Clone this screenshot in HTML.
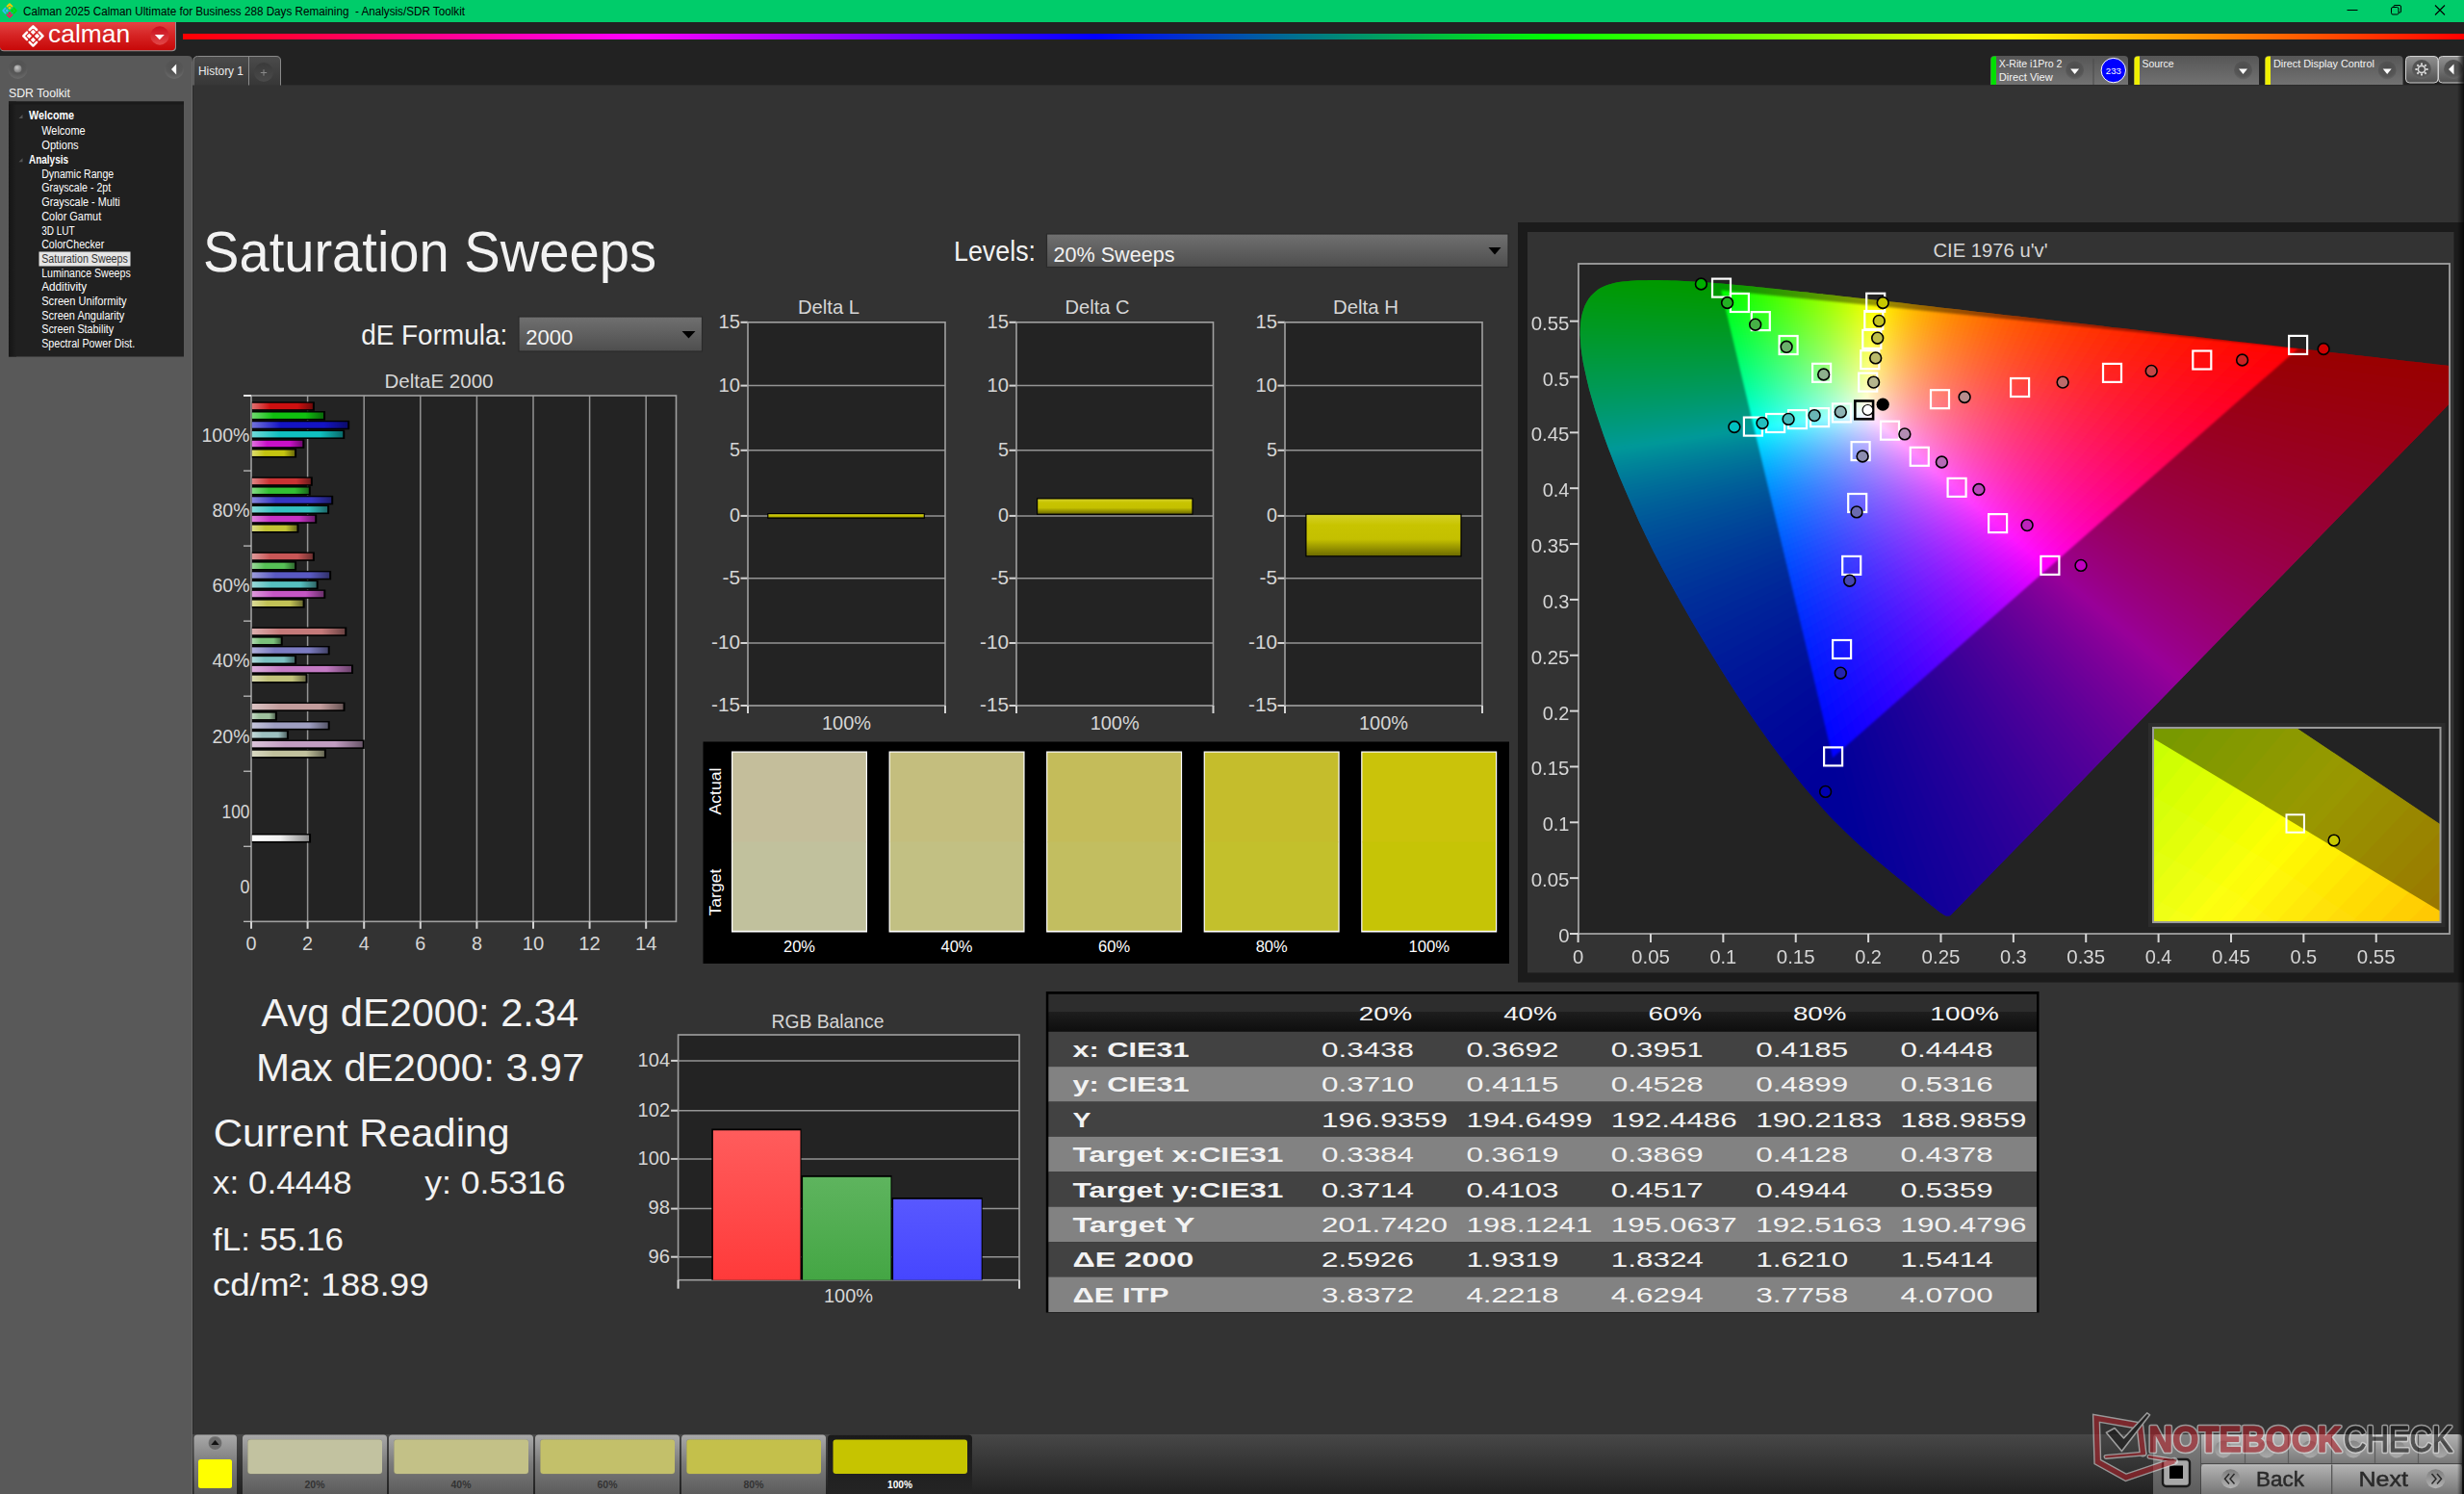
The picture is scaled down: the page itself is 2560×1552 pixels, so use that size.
<!DOCTYPE html>
<html lang="en"><head><meta charset="utf-8"><title>Calman 2025 - Analysis/SDR Toolkit</title>
<style>html,body{margin:0;padding:0;background:#333;overflow:hidden}svg{display:block;font-family:"Liberation Sans",sans-serif}text{font-kerning:normal}</style>
</head><body>
<svg width="2560" height="1552" viewBox="0 0 2560 1552">
<defs>
<linearGradient id="rainbow" x1="0" x2="1" y1="0" y2="0">
<stop offset="0" stop-color="#ff0000"/><stop offset="0.2" stop-color="#ff00ff"/><stop offset="0.4" stop-color="#0000ff"/>
<stop offset="0.6" stop-color="#00ff00"/><stop offset="0.8" stop-color="#ffff00"/><stop offset="1" stop-color="#ff0000"/>
</linearGradient>
<linearGradient id="redbtn" x1="0" x2="0" y1="0" y2="1"><stop offset="0" stop-color="#e24444"/><stop offset="0.5" stop-color="#d52222"/><stop offset="1" stop-color="#c80808"/></linearGradient>
<linearGradient id="devbox" x1="0" x2="0" y1="0" y2="1"><stop offset="0" stop-color="#565656"/><stop offset="1" stop-color="#727272"/></linearGradient>
<linearGradient id="tabg" x1="0" x2="0" y1="0" y2="1"><stop offset="0" stop-color="#4b4b4b"/><stop offset="1" stop-color="#373737"/></linearGradient>
<linearGradient id="gearbtn" x1="0" x2="0" y1="0" y2="1"><stop offset="0" stop-color="#919191"/><stop offset="1" stop-color="#505050"/></linearGradient>
<radialGradient id="ddc" cx="0.5" cy="0.35" r="0.7"><stop offset="0" stop-color="#4c4c4c"/><stop offset="0.7" stop-color="#565656"/><stop offset="1" stop-color="#6c6c6c"/></radialGradient>
<radialGradient id="sidec" cx="0.5" cy="0.3" r="0.75"><stop offset="0" stop-color="#505050"/><stop offset="0.6" stop-color="#575757"/><stop offset="1" stop-color="#6e6e6e"/></radialGradient>
<radialGradient id="ball" cx="0.4" cy="0.35" r="0.7"><stop offset="0" stop-color="#c8c8c8"/><stop offset="1" stop-color="#707070"/></radialGradient>
<linearGradient id="treeL" x1="0" x2="1" y1="0" y2="0"><stop offset="0" stop-color="#151515"/><stop offset="1" stop-color="#202020"/></linearGradient>
<linearGradient id="strip" x1="0" x2="0" y1="0" y2="1"><stop offset="0" stop-color="#474747"/><stop offset="1" stop-color="#222222"/></linearGradient>
<linearGradient id="pbtn" x1="0" x2="0" y1="0" y2="1"><stop offset="0" stop-color="#a9a9a9"/><stop offset="0.5" stop-color="#7a7a7a"/><stop offset="1" stop-color="#5c5c5c"/></linearGradient>
<linearGradient id="pbtnsel" x1="0" x2="0" y1="0" y2="1"><stop offset="0" stop-color="#1a1a1a"/><stop offset="1" stop-color="#242424"/></linearGradient>
<linearGradient id="navbtn" x1="0" x2="0" y1="0" y2="1"><stop offset="0" stop-color="#b4b4b4"/><stop offset="1" stop-color="#777777"/></linearGradient>
<linearGradient id="combo" x1="0" x2="0" y1="0" y2="1"><stop offset="0" stop-color="#707070"/><stop offset="1" stop-color="#4e4e4e"/></linearGradient>
<linearGradient id="redge" x1="0" x2="1" y1="0" y2="0"><stop offset="0" stop-color="#000" stop-opacity="0"/><stop offset="1" stop-color="#000" stop-opacity="0.75"/></linearGradient>
</defs>
<rect x="0.00" y="0.00" width="2560.00" height="1552.00" fill="#333333"/>
<rect x="0.00" y="23.00" width="2560.00" height="65.00" fill="#222222"/>
<rect x="0.00" y="0.00" width="2560.00" height="23.00" fill="#00cc6a"/>
<g transform="translate(10,11) rotate(45) scale(0.68)">
<path d="M-7.15,-1.9 V-7.15 H-1.9" fill="none" stroke="#ffc800" stroke-width="2.5" stroke-linecap="round" stroke-linejoin="round"/><path d="M1.9,-7.15 H7.15 V-1.9" fill="none" stroke="#00dc00" stroke-width="2.5" stroke-linecap="round" stroke-linejoin="round"/><path d="M7.15,1.9 V7.15 H1.9" fill="none" stroke="#ff1060" stroke-width="2.5" stroke-linecap="round" stroke-linejoin="round"/><path d="M-1.9,7.15 H-7.15 V1.9" fill="none" stroke="#33bbff" stroke-width="2.5" stroke-linecap="round" stroke-linejoin="round"/><rect x="-4.80" y="-4.80" width="3.8" height="3.8" rx="0.4" fill="#ffc800"/><rect x="1.00" y="-4.80" width="3.8" height="3.8" rx="0.4" fill="#00dc00"/><rect x="1.00" y="1.00" width="3.8" height="3.8" rx="0.4" fill="#ff1060"/><rect x="-4.80" y="1.00" width="3.8" height="3.8" rx="0.4" fill="#33bbff"/>
</g>
<text x="24.0" y="16.0" font-size="12" fill="#000" textLength="459.0" lengthAdjust="spacingAndGlyphs" xml:space="preserve">Calman 2025 Calman Ultimate for Business 288 Days Remaining  - Analysis/SDR Toolkit</text>
<line x1="2438.50" y1="10.50" x2="2449.50" y2="10.50" stroke="#000" stroke-width="1"/>
<rect x="2484.5" y="7.5" width="7.5" height="7.5" rx="1.5" fill="none" stroke="#000" stroke-width="1"/>
<path d="M2487 7.5 V6.5 Q2487 5.5 2488 5.5 H2493 Q2494.5 5.5 2494.5 7 V12 Q2494.5 13 2493.5 13 H2492" fill="none" stroke="#000" stroke-width="1"/>
<path d="M2530 5.5 L2540 15.5 M2540 5.5 L2530 15.5" stroke="#000" stroke-width="1.1" fill="none"/>
<path d="M0 23 H183 V49 Q183 53.3 178.7 53.3 H4 Q0 53.3 0 49 Z" fill="#8e9292"/>
<path d="M0 23 H182 V48.5 Q182 52.2 178.3 52.2 H4 Q0 52.2 0 48.5 Z" fill="url(#redbtn)"/>
<rect x="0.00" y="23.00" width="182.00" height="1.00" fill="#f03444"/>
<g transform="translate(34.4,37.4) rotate(45) scale(1)">
<path d="M-7.15,-1.9 V-7.15 H-1.9" fill="none" stroke="#fff" stroke-width="2.5" stroke-linecap="round" stroke-linejoin="round"/><path d="M1.9,-7.15 H7.15 V-1.9" fill="none" stroke="#fff" stroke-width="2.5" stroke-linecap="round" stroke-linejoin="round"/><path d="M7.15,1.9 V7.15 H1.9" fill="none" stroke="#fff" stroke-width="2.5" stroke-linecap="round" stroke-linejoin="round"/><path d="M-1.9,7.15 H-7.15 V1.9" fill="none" stroke="#fff" stroke-width="2.5" stroke-linecap="round" stroke-linejoin="round"/><rect x="-4.80" y="-4.80" width="3.8" height="3.8" rx="0.4" fill="#fff"/><rect x="1.00" y="-4.80" width="3.8" height="3.8" rx="0.4" fill="#fff"/><rect x="1.00" y="1.00" width="3.8" height="3.8" rx="0.4" fill="#fff"/><rect x="-4.80" y="1.00" width="3.8" height="3.8" rx="0.4" fill="#fff"/>
</g>
<text x="50.1" y="44.0" font-size="25" fill="#fff" textLength="85.0" lengthAdjust="spacingAndGlyphs">calman</text>
<defs><linearGradient id="redc" x1="0" x2="0" y1="0" y2="1"><stop offset="0" stop-color="#c80c1c"/><stop offset="1" stop-color="#e24848"/></linearGradient></defs>
<circle cx="166" cy="37" r="9.7" fill="url(#redc)"/>
<polygon points="160.8,36 170.8,36 165.8,41.2" fill="#fff"/>
<rect x="190.00" y="35.00" width="2370.00" height="6.00" fill="url(#rainbow)"/>
<path d="M0 58 H195 Q200 58 200 63 V1552 H0 Z" fill="#595959"/>
<line x1="199.50" y1="64.00" x2="199.50" y2="1552.00" stroke="#676767" stroke-width="1"/>
<line x1="200.50" y1="88.00" x2="200.50" y2="1552.00" stroke="#2a2a2a" stroke-width="1"/>
<circle cx="18.5" cy="72" r="10" fill="url(#sidec)"/><circle cx="18.5" cy="71.5" r="4" fill="url(#ball)"/>
<circle cx="181" cy="72" r="10" fill="url(#sidec)"/><polygon points="178,72 183.2,66.5 183.2,77.5" fill="#fff"/>
<text x="9.0" y="100.5" font-size="12.3" fill="#f4f4f4" textLength="64.0" lengthAdjust="spacingAndGlyphs">SDR Toolkit</text>
<rect x="9.00" y="105.50" width="182.00" height="265.00" fill="#202020"/>
<rect x="9.00" y="105.50" width="8.00" height="265.00" fill="url(#treeL)"/>
<rect x="9.00" y="105.50" width="182.00" height="3.00" fill="#1a1a1a"/>
<polygon points="19.5,123 23.5,123 23.5,119" fill="#555"/>
<text x="30.0" y="124.4" font-size="12" fill="#fff" font-weight="bold" textLength="47.0" lengthAdjust="spacingAndGlyphs">Welcome</text>
<text x="43.2" y="140.4" font-size="12" fill="#fff" textLength="45.5" lengthAdjust="spacingAndGlyphs">Welcome</text>
<text x="43.2" y="154.7" font-size="12" fill="#fff" textLength="38.5" lengthAdjust="spacingAndGlyphs">Options</text>
<polygon points="19.5,168.3 23.5,168.3 23.5,164.3" fill="#555"/>
<text x="30.0" y="169.7" font-size="12" fill="#fff" font-weight="bold" textLength="41.0" lengthAdjust="spacingAndGlyphs">Analysis</text>
<text x="43.2" y="185.2" font-size="12" fill="#fff" textLength="75.0" lengthAdjust="spacingAndGlyphs">Dynamic Range</text>
<text x="43.2" y="199.4" font-size="12" fill="#fff" textLength="72.0" lengthAdjust="spacingAndGlyphs">Grayscale - 2pt</text>
<text x="43.2" y="214.4" font-size="12" fill="#fff" textLength="81.5" lengthAdjust="spacingAndGlyphs">Grayscale - Multi</text>
<text x="43.2" y="229.4" font-size="12" fill="#fff" textLength="62.0" lengthAdjust="spacingAndGlyphs">Color Gamut</text>
<text x="43.2" y="243.7" font-size="12" fill="#fff" textLength="34.5" lengthAdjust="spacingAndGlyphs">3D LUT</text>
<text x="43.2" y="258.4" font-size="12" fill="#fff" textLength="65.0" lengthAdjust="spacingAndGlyphs">ColorChecker</text>
<rect x="40.50" y="261.50" width="95.00" height="15.00" fill="#e4e4e4"/>
<text x="43.2" y="273.2" font-size="12" fill="#333" textLength="89.6" lengthAdjust="spacingAndGlyphs">Saturation Sweeps</text>
<text x="43.2" y="287.8" font-size="12" fill="#fff" textLength="92.5" lengthAdjust="spacingAndGlyphs">Luminance Sweeps</text>
<text x="43.2" y="302.4" font-size="12" fill="#fff" textLength="47.0" lengthAdjust="spacingAndGlyphs">Additivity</text>
<text x="43.2" y="317.4" font-size="12" fill="#fff" textLength="88.5" lengthAdjust="spacingAndGlyphs">Screen Uniformity</text>
<text x="43.2" y="331.7" font-size="12" fill="#fff" textLength="86.0" lengthAdjust="spacingAndGlyphs">Screen Angularity</text>
<text x="43.2" y="346.4" font-size="12" fill="#fff" textLength="75.0" lengthAdjust="spacingAndGlyphs">Screen Stability</text>
<text x="43.2" y="361.4" font-size="12" fill="#fff" textLength="97.0" lengthAdjust="spacingAndGlyphs">Spectral Power Dist.</text>
<path d="M201 88.5 V63 Q201 58.5 205.5 58.5 H287 Q291.5 58.5 291.5 63 V88.5 Z" fill="url(#tabg)"/>
<path d="M201 88.5 V63 Q201 58.5 205.5 58.5 H287 Q291.5 58.5 291.5 63 V88.5" fill="none" stroke="#8a8a8a" stroke-width="1"/>
<line x1="258.50" y1="59.00" x2="258.50" y2="88.50" stroke="#8a8a8a" stroke-width="1"/>
<line x1="292.00" y1="88.50" x2="2560.00" y2="88.50" stroke="#2c2c2c" stroke-width="1"/>
<text x="206.0" y="78.2" font-size="12" fill="#ececec" textLength="47.0" lengthAdjust="spacingAndGlyphs">History 1</text>
<defs><linearGradient id="plusc" x1="0" x2="0" y1="0" y2="1"><stop offset="0" stop-color="#3a3a3a"/><stop offset="1" stop-color="#4a4a4a"/></linearGradient></defs>
<circle cx="274" cy="75" r="10" fill="url(#plusc)"/>
<path d="M270.8 75.5 H277.2 M274 72.3 V78.7" stroke="#8a8a8a" stroke-width="1"/>
<path d="M2068 88 V62 Q2068 58 2072 58 H2207 Q2211 58 2211 62 V88 Z" fill="url(#devbox)"/>
<path d="M2068.5 88 V62 Q2068.5 58.5 2072 58.5 H2074 V88 Z" fill="#00e000"/>
<text x="2076.8" y="69.5" font-size="11" fill="#f4f4f4" textLength="65.7" lengthAdjust="spacingAndGlyphs">X-Rite i1Pro 2</text>
<text x="2076.8" y="83.5" font-size="11" fill="#f4f4f4" textLength="56.0" lengthAdjust="spacingAndGlyphs">Direct View</text>
<circle cx="2155.6" cy="73" r="9.5" fill="url(#ddc)"/><polygon points="2151.1,71.5 2160.1,71.5 2155.6,77" fill="#fff"/>
<line x1="2175.00" y1="61.00" x2="2175.00" y2="88.00" stroke="#4a4a4a" stroke-width="1"/>
<circle cx="2195.8" cy="73.1" r="12.7" fill="#0000ff" stroke="#fff" stroke-width="1"/>
<text x="2195.8" y="76.5" font-size="9.5" fill="#fff" text-anchor="middle" textLength="16.0" lengthAdjust="spacingAndGlyphs">233</text>
<path d="M2217 88 V62 Q2217 58 2221 58 H2343 Q2347 58 2347 62 V88 Z" fill="url(#devbox)"/>
<path d="M2217.5 88 V62 Q2217.5 58.5 2221 58.5 H2223 V88 Z" fill="#f0f000"/>
<text x="2225.6" y="69.5" font-size="11" fill="#f4f4f4" textLength="33.0" lengthAdjust="spacingAndGlyphs">Source</text>
<circle cx="2330.5" cy="73" r="9.5" fill="url(#ddc)"/><polygon points="2326.0,71.5 2335.0,71.5 2330.5,77" fill="#fff"/>
<path d="M2353 88 V62 Q2353 58 2357 58 H2492.5 Q2496.5 58 2496.5 62 V88 Z" fill="url(#devbox)"/>
<path d="M2353.5 88 V62 Q2353.5 58.5 2357 58.5 H2359 V88 Z" fill="#f0f000"/>
<text x="2361.9" y="69.5" font-size="11" fill="#f4f4f4" textLength="105.0" lengthAdjust="spacingAndGlyphs">Direct Display Control</text>
<circle cx="2480.2" cy="73" r="9.5" fill="url(#ddc)"/><polygon points="2475.7,71.5 2484.7,71.5 2480.2,77" fill="#fff"/>
<rect x="2499.5" y="58.5" width="33.5" height="27.5" rx="4" fill="url(#gearbtn)" stroke="#d0d0d0" stroke-width="1"/>
<rect x="2533.5" y="58.5" width="33.5" height="27.5" rx="4" fill="url(#gearbtn)" stroke="#d0d0d0" stroke-width="1"/>
<circle cx="2516" cy="72" r="10" fill="url(#ddc)"/><circle cx="2549" cy="72" r="10" fill="url(#ddc)"/>
<g transform="translate(2516,72)" stroke="#d8d8d8" fill="none"><circle r="3.6" stroke-width="1.6"/><line x1="4.40" y1="0.00" x2="6.60" y2="0.00" stroke-width="2"/><line x1="3.11" y1="3.11" x2="4.67" y2="4.67" stroke-width="2"/><line x1="0.00" y1="4.40" x2="0.00" y2="6.60" stroke-width="2"/><line x1="-3.11" y1="3.11" x2="-4.67" y2="4.67" stroke-width="2"/><line x1="-4.40" y1="0.00" x2="-6.60" y2="0.00" stroke-width="2"/><line x1="-3.11" y1="-3.11" x2="-4.67" y2="-4.67" stroke-width="2"/><line x1="-0.00" y1="-4.40" x2="-0.00" y2="-6.60" stroke-width="2"/><line x1="3.11" y1="-3.11" x2="4.67" y2="-4.67" stroke-width="2"/></g>
<polygon points="2544,72 2549.5,66.5 2549.5,77.5" fill="#fff"/>
<text x="211.0" y="282.0" font-size="60" fill="#f2f2f2" textLength="471.0" lengthAdjust="spacingAndGlyphs">Saturation Sweeps</text>
<text x="527.2" y="358.0" font-size="29" fill="#f2f2f2" text-anchor="end" textLength="152.0" lengthAdjust="spacingAndGlyphs">dE Formula:</text>
<rect x="539" y="329" width="190.5" height="36" fill="url(#combo)" stroke="#2a2a2a" stroke-width="1.2"/>
<text x="546.2" y="358.0" font-size="22.5" fill="#f2f2f2" textLength="49.0" lengthAdjust="spacingAndGlyphs">2000</text>
<polygon points="708.5,344 722.5,344 715.5,351.5" fill="#000"/>
<text x="1076.0" y="270.5" font-size="29" fill="#f2f2f2" text-anchor="end" textLength="85.0" lengthAdjust="spacingAndGlyphs">Levels:</text>
<rect x="1087.5" y="243" width="479.5" height="34.5" fill="url(#combo)" stroke="#2a2a2a" stroke-width="1.2"/>
<clipPath id="lvclip"><rect x="1088" y="243.5" width="478" height="33.5"/></clipPath>
<g clip-path="url(#lvclip)"><text x="1094.5" y="272.0" font-size="22.5" fill="#f2f2f2" textLength="126.0" lengthAdjust="spacingAndGlyphs">20% Sweeps</text>
</g>
<polygon points="1546.5,257 1559.5,257 1553,264.5" fill="#000"/>
<text x="456.0" y="402.5" font-size="21" fill="#d6d6d6" text-anchor="middle" textLength="113.0" lengthAdjust="spacingAndGlyphs">DeltaE 2000</text>
<rect x="261.00" y="411.00" width="441.50" height="546.30" fill="#232323"/>
<line x1="319.60" y1="411.00" x2="319.60" y2="957.30" stroke="#949494" stroke-width="1.5"/>
<line x1="378.20" y1="411.00" x2="378.20" y2="957.30" stroke="#949494" stroke-width="1.5"/>
<line x1="436.80" y1="411.00" x2="436.80" y2="957.30" stroke="#949494" stroke-width="1.5"/>
<line x1="495.40" y1="411.00" x2="495.40" y2="957.30" stroke="#949494" stroke-width="1.5"/>
<line x1="554.00" y1="411.00" x2="554.00" y2="957.30" stroke="#949494" stroke-width="1.5"/>
<line x1="612.60" y1="411.00" x2="612.60" y2="957.30" stroke="#949494" stroke-width="1.5"/>
<line x1="671.20" y1="411.00" x2="671.20" y2="957.30" stroke="#949494" stroke-width="1.5"/>
<rect x="261.0" y="411.0" width="441.5" height="546.3" fill="none" stroke="#a0a0a0" stroke-width="1.6"/>
<line x1="253.00" y1="411.00" x2="261.00" y2="411.00" stroke="#e8e8e8" stroke-width="2"/>
<line x1="253.00" y1="489.04" x2="261.00" y2="489.04" stroke="#c8c8c8" stroke-width="1.2"/>
<line x1="253.00" y1="567.09" x2="261.00" y2="567.09" stroke="#c8c8c8" stroke-width="1.2"/>
<line x1="253.00" y1="645.13" x2="261.00" y2="645.13" stroke="#c8c8c8" stroke-width="1.2"/>
<line x1="253.00" y1="723.17" x2="261.00" y2="723.17" stroke="#c8c8c8" stroke-width="1.2"/>
<line x1="253.00" y1="801.21" x2="261.00" y2="801.21" stroke="#c8c8c8" stroke-width="1.2"/>
<line x1="253.00" y1="879.26" x2="261.00" y2="879.26" stroke="#c8c8c8" stroke-width="1.2"/>
<line x1="253.00" y1="957.30" x2="261.00" y2="957.30" stroke="#c8c8c8" stroke-width="1.2"/>
<text x="259.5" y="459.3" font-size="21" fill="#d6d6d6" text-anchor="end" textLength="50.0" lengthAdjust="spacingAndGlyphs">100%</text>
<text x="259.5" y="537.4" font-size="21" fill="#d6d6d6" text-anchor="end" textLength="39.0" lengthAdjust="spacingAndGlyphs">80%</text>
<text x="259.5" y="615.4" font-size="21" fill="#d6d6d6" text-anchor="end" textLength="39.0" lengthAdjust="spacingAndGlyphs">60%</text>
<text x="259.5" y="693.4" font-size="21" fill="#d6d6d6" text-anchor="end" textLength="39.0" lengthAdjust="spacingAndGlyphs">40%</text>
<text x="259.5" y="771.5" font-size="21" fill="#d6d6d6" text-anchor="end" textLength="39.0" lengthAdjust="spacingAndGlyphs">20%</text>
<text x="259.5" y="849.5" font-size="21" fill="#d6d6d6" text-anchor="end" textLength="29.0" lengthAdjust="spacingAndGlyphs">100</text>
<text x="259.5" y="927.6" font-size="21" fill="#d6d6d6" text-anchor="end" textLength="10.0" lengthAdjust="spacingAndGlyphs">0</text>
<line x1="261.00" y1="957.30" x2="261.00" y2="964.80" stroke="#d4d4d4" stroke-width="2"/>
<text x="261.0" y="987.3" font-size="21" fill="#d6d6d6" text-anchor="middle" textLength="11.0" lengthAdjust="spacingAndGlyphs">0</text>
<line x1="319.60" y1="957.30" x2="319.60" y2="964.80" stroke="#d4d4d4" stroke-width="2"/>
<text x="319.6" y="987.3" font-size="21" fill="#d6d6d6" text-anchor="middle" textLength="11.0" lengthAdjust="spacingAndGlyphs">2</text>
<line x1="378.20" y1="957.30" x2="378.20" y2="964.80" stroke="#d4d4d4" stroke-width="2"/>
<text x="378.2" y="987.3" font-size="21" fill="#d6d6d6" text-anchor="middle" textLength="11.0" lengthAdjust="spacingAndGlyphs">4</text>
<line x1="436.80" y1="957.30" x2="436.80" y2="964.80" stroke="#d4d4d4" stroke-width="2"/>
<text x="436.8" y="987.3" font-size="21" fill="#d6d6d6" text-anchor="middle" textLength="11.0" lengthAdjust="spacingAndGlyphs">6</text>
<line x1="495.40" y1="957.30" x2="495.40" y2="964.80" stroke="#d4d4d4" stroke-width="2"/>
<text x="495.4" y="987.3" font-size="21" fill="#d6d6d6" text-anchor="middle" textLength="11.0" lengthAdjust="spacingAndGlyphs">8</text>
<line x1="554.00" y1="957.30" x2="554.00" y2="964.80" stroke="#d4d4d4" stroke-width="2"/>
<text x="554.0" y="987.3" font-size="21" fill="#d6d6d6" text-anchor="middle" textLength="22.5" lengthAdjust="spacingAndGlyphs">10</text>
<line x1="612.60" y1="957.30" x2="612.60" y2="964.80" stroke="#d4d4d4" stroke-width="2"/>
<text x="612.6" y="987.3" font-size="21" fill="#d6d6d6" text-anchor="middle" textLength="22.5" lengthAdjust="spacingAndGlyphs">12</text>
<line x1="671.20" y1="957.30" x2="671.20" y2="964.80" stroke="#d4d4d4" stroke-width="2"/>
<text x="671.2" y="987.3" font-size="21" fill="#d6d6d6" text-anchor="middle" textLength="22.5" lengthAdjust="spacingAndGlyphs">14</text>
<defs>
<linearGradient id="bg1" x1="0" x2="1" y1="0" y2="0"><stop offset="0" stop-color="#e17070"/><stop offset="0.3" stop-color="#cd1010"/><stop offset="0.75" stop-color="#cd1010"/><stop offset="1" stop-color="#710909"/></linearGradient>
<linearGradient id="bg2" x1="0" x2="1" y1="0" y2="0"><stop offset="0" stop-color="#70d970"/><stop offset="0.3" stop-color="#10c010"/><stop offset="0.75" stop-color="#10c010"/><stop offset="1" stop-color="#096a09"/></linearGradient>
<linearGradient id="bg3" x1="0" x2="1" y1="0" y2="0"><stop offset="0" stop-color="#7272db"/><stop offset="0.3" stop-color="#1414c3"/><stop offset="0.75" stop-color="#1414c3"/><stop offset="1" stop-color="#0b0b6b"/></linearGradient>
<linearGradient id="bg4" x1="0" x2="1" y1="0" y2="0"><stop offset="0" stop-color="#70d9d9"/><stop offset="0.3" stop-color="#10c0c0"/><stop offset="0.75" stop-color="#10c0c0"/><stop offset="1" stop-color="#096a6a"/></linearGradient>
<linearGradient id="bg5" x1="0" x2="1" y1="0" y2="0"><stop offset="0" stop-color="#de70de"/><stop offset="0.3" stop-color="#c810c8"/><stop offset="0.75" stop-color="#c810c8"/><stop offset="1" stop-color="#6e096e"/></linearGradient>
<linearGradient id="bg6" x1="0" x2="1" y1="0" y2="0"><stop offset="0" stop-color="#dcdc70"/><stop offset="0.3" stop-color="#c4c410"/><stop offset="0.75" stop-color="#c4c410"/><stop offset="1" stop-color="#6c6c09"/></linearGradient>
<linearGradient id="bg7" x1="0" x2="1" y1="0" y2="0"><stop offset="0" stop-color="#df8585"/><stop offset="0.3" stop-color="#ca3333"/><stop offset="0.75" stop-color="#ca3333"/><stop offset="1" stop-color="#6f1c1c"/></linearGradient>
<linearGradient id="bg8" x1="0" x2="1" y1="0" y2="0"><stop offset="0" stop-color="#85d985"/><stop offset="0.3" stop-color="#33c033"/><stop offset="0.75" stop-color="#33c033"/><stop offset="1" stop-color="#1c6a1c"/></linearGradient>
<linearGradient id="bg9" x1="0" x2="1" y1="0" y2="0"><stop offset="0" stop-color="#8787db"/><stop offset="0.3" stop-color="#3636c2"/><stop offset="0.75" stop-color="#3636c2"/><stop offset="1" stop-color="#1e1e6b"/></linearGradient>
<linearGradient id="bg10" x1="0" x2="1" y1="0" y2="0"><stop offset="0" stop-color="#85d9d9"/><stop offset="0.3" stop-color="#33c0c0"/><stop offset="0.75" stop-color="#33c0c0"/><stop offset="1" stop-color="#1c6a6a"/></linearGradient>
<linearGradient id="bg11" x1="0" x2="1" y1="0" y2="0"><stop offset="0" stop-color="#dd85dd"/><stop offset="0.3" stop-color="#c633c6"/><stop offset="0.75" stop-color="#c633c6"/><stop offset="1" stop-color="#6d1c6d"/></linearGradient>
<linearGradient id="bg12" x1="0" x2="1" y1="0" y2="0"><stop offset="0" stop-color="#dbdb85"/><stop offset="0.3" stop-color="#c3c333"/><stop offset="0.75" stop-color="#c3c333"/><stop offset="1" stop-color="#6b6b1c"/></linearGradient>
<linearGradient id="bg13" x1="0" x2="1" y1="0" y2="0"><stop offset="0" stop-color="#de9a9a"/><stop offset="0.3" stop-color="#c85656"/><stop offset="0.75" stop-color="#c85656"/><stop offset="1" stop-color="#6e3030"/></linearGradient>
<linearGradient id="bg14" x1="0" x2="1" y1="0" y2="0"><stop offset="0" stop-color="#9ad99a"/><stop offset="0.3" stop-color="#56c056"/><stop offset="0.75" stop-color="#56c056"/><stop offset="1" stop-color="#306a30"/></linearGradient>
<linearGradient id="bg15" x1="0" x2="1" y1="0" y2="0"><stop offset="0" stop-color="#9b9bda"/><stop offset="0.3" stop-color="#5959c2"/><stop offset="0.75" stop-color="#5959c2"/><stop offset="1" stop-color="#31316b"/></linearGradient>
<linearGradient id="bg16" x1="0" x2="1" y1="0" y2="0"><stop offset="0" stop-color="#9ad9d9"/><stop offset="0.3" stop-color="#56c0c0"/><stop offset="0.75" stop-color="#56c0c0"/><stop offset="1" stop-color="#306a6a"/></linearGradient>
<linearGradient id="bg17" x1="0" x2="1" y1="0" y2="0"><stop offset="0" stop-color="#dc9adc"/><stop offset="0.3" stop-color="#c556c5"/><stop offset="0.75" stop-color="#c556c5"/><stop offset="1" stop-color="#6c306c"/></linearGradient>
<linearGradient id="bg18" x1="0" x2="1" y1="0" y2="0"><stop offset="0" stop-color="#dbdb9a"/><stop offset="0.3" stop-color="#c2c256"/><stop offset="0.75" stop-color="#c2c256"/><stop offset="1" stop-color="#6b6b30"/></linearGradient>
<linearGradient id="bg19" x1="0" x2="1" y1="0" y2="0"><stop offset="0" stop-color="#dcafaf"/><stop offset="0.3" stop-color="#c57a7a"/><stop offset="0.75" stop-color="#c57a7a"/><stop offset="1" stop-color="#6c4343"/></linearGradient>
<linearGradient id="bg20" x1="0" x2="1" y1="0" y2="0"><stop offset="0" stop-color="#afd9af"/><stop offset="0.3" stop-color="#7ac07a"/><stop offset="0.75" stop-color="#7ac07a"/><stop offset="1" stop-color="#436a43"/></linearGradient>
<linearGradient id="bg21" x1="0" x2="1" y1="0" y2="0"><stop offset="0" stop-color="#b0b0da"/><stop offset="0.3" stop-color="#7b7bc1"/><stop offset="0.75" stop-color="#7b7bc1"/><stop offset="1" stop-color="#44446a"/></linearGradient>
<linearGradient id="bg22" x1="0" x2="1" y1="0" y2="0"><stop offset="0" stop-color="#afd9d9"/><stop offset="0.3" stop-color="#7ac0c0"/><stop offset="0.75" stop-color="#7ac0c0"/><stop offset="1" stop-color="#436a6a"/></linearGradient>
<linearGradient id="bg23" x1="0" x2="1" y1="0" y2="0"><stop offset="0" stop-color="#dbafdb"/><stop offset="0.3" stop-color="#c37ac3"/><stop offset="0.75" stop-color="#c37ac3"/><stop offset="1" stop-color="#6b436b"/></linearGradient>
<linearGradient id="bg24" x1="0" x2="1" y1="0" y2="0"><stop offset="0" stop-color="#dadaaf"/><stop offset="0.3" stop-color="#c2c27a"/><stop offset="0.75" stop-color="#c2c27a"/><stop offset="1" stop-color="#6a6a43"/></linearGradient>
<linearGradient id="bg25" x1="0" x2="1" y1="0" y2="0"><stop offset="0" stop-color="#dbc4c4"/><stop offset="0.3" stop-color="#c39d9d"/><stop offset="0.75" stop-color="#c39d9d"/><stop offset="1" stop-color="#6b5656"/></linearGradient>
<linearGradient id="bg26" x1="0" x2="1" y1="0" y2="0"><stop offset="0" stop-color="#c4d9c4"/><stop offset="0.3" stop-color="#9dc09d"/><stop offset="0.75" stop-color="#9dc09d"/><stop offset="1" stop-color="#566a56"/></linearGradient>
<linearGradient id="bg27" x1="0" x2="1" y1="0" y2="0"><stop offset="0" stop-color="#c5c5da"/><stop offset="0.3" stop-color="#9e9ec1"/><stop offset="0.75" stop-color="#9e9ec1"/><stop offset="1" stop-color="#57576a"/></linearGradient>
<linearGradient id="bg28" x1="0" x2="1" y1="0" y2="0"><stop offset="0" stop-color="#c4d9d9"/><stop offset="0.3" stop-color="#9dc0c0"/><stop offset="0.75" stop-color="#9dc0c0"/><stop offset="1" stop-color="#566a6a"/></linearGradient>
<linearGradient id="bg29" x1="0" x2="1" y1="0" y2="0"><stop offset="0" stop-color="#dac4da"/><stop offset="0.3" stop-color="#c29dc2"/><stop offset="0.75" stop-color="#c29dc2"/><stop offset="1" stop-color="#6a566a"/></linearGradient>
<linearGradient id="bg30" x1="0" x2="1" y1="0" y2="0"><stop offset="0" stop-color="#dadac4"/><stop offset="0.3" stop-color="#c1c19d"/><stop offset="0.75" stop-color="#c1c19d"/><stop offset="1" stop-color="#6a6a56"/></linearGradient>
<linearGradient id="bgw" x1="0" x2="1" y1="0" y2="0"><stop offset="0" stop-color="#ffffff"/><stop offset="0.5" stop-color="#f0f0f0"/><stop offset="1" stop-color="#8a8a8a"/></linearGradient>
</defs>
<rect x="261.80" y="417.36" width="65.07" height="9.40" fill="#000"/>
<rect x="261.80" y="418.76" width="63.07" height="6.40" fill="url(#bg1)"/>
<rect x="261.80" y="427.11" width="76.21" height="9.40" fill="#000"/>
<rect x="261.80" y="428.51" width="74.21" height="6.40" fill="url(#bg2)"/>
<rect x="261.80" y="436.87" width="101.41" height="9.40" fill="#000"/>
<rect x="261.80" y="438.27" width="99.41" height="6.40" fill="url(#bg3)"/>
<rect x="261.80" y="446.62" width="96.43" height="9.40" fill="#000"/>
<rect x="261.80" y="448.02" width="94.43" height="6.40" fill="url(#bg4)"/>
<rect x="261.80" y="456.38" width="54.53" height="9.40" fill="#000"/>
<rect x="261.80" y="457.78" width="52.53" height="6.40" fill="url(#bg5)"/>
<rect x="261.80" y="466.13" width="46.32" height="9.40" fill="#000"/>
<rect x="261.80" y="467.53" width="44.32" height="6.40" fill="url(#bg6)"/>
<rect x="261.80" y="495.40" width="63.02" height="9.40" fill="#000"/>
<rect x="261.80" y="496.80" width="61.02" height="6.40" fill="url(#bg7)"/>
<rect x="261.80" y="505.15" width="60.97" height="9.40" fill="#000"/>
<rect x="261.80" y="506.55" width="58.97" height="6.40" fill="url(#bg8)"/>
<rect x="261.80" y="514.91" width="84.41" height="9.40" fill="#000"/>
<rect x="261.80" y="516.31" width="82.41" height="6.40" fill="url(#bg9)"/>
<rect x="261.80" y="524.66" width="80.31" height="9.40" fill="#000"/>
<rect x="261.80" y="526.06" width="78.31" height="6.40" fill="url(#bg10)"/>
<rect x="261.80" y="534.42" width="67.42" height="9.40" fill="#000"/>
<rect x="261.80" y="535.82" width="65.42" height="6.40" fill="url(#bg11)"/>
<rect x="261.80" y="544.18" width="48.67" height="9.40" fill="#000"/>
<rect x="261.80" y="545.58" width="46.67" height="6.40" fill="url(#bg12)"/>
<rect x="261.80" y="573.44" width="65.07" height="9.40" fill="#000"/>
<rect x="261.80" y="574.84" width="63.07" height="6.40" fill="url(#bg13)"/>
<rect x="261.80" y="583.20" width="46.32" height="9.40" fill="#000"/>
<rect x="261.80" y="584.60" width="44.32" height="6.40" fill="url(#bg14)"/>
<rect x="261.80" y="592.95" width="82.36" height="9.40" fill="#000"/>
<rect x="261.80" y="594.35" width="80.36" height="6.40" fill="url(#bg15)"/>
<rect x="261.80" y="602.71" width="68.88" height="9.40" fill="#000"/>
<rect x="261.80" y="604.11" width="66.88" height="6.40" fill="url(#bg16)"/>
<rect x="261.80" y="612.46" width="76.50" height="9.40" fill="#000"/>
<rect x="261.80" y="613.86" width="74.50" height="6.40" fill="url(#bg17)"/>
<rect x="261.80" y="622.22" width="54.82" height="9.40" fill="#000"/>
<rect x="261.80" y="623.62" width="52.82" height="6.40" fill="url(#bg18)"/>
<rect x="261.80" y="651.48" width="98.48" height="9.40" fill="#000"/>
<rect x="261.80" y="652.88" width="96.48" height="6.40" fill="url(#bg19)"/>
<rect x="261.80" y="661.24" width="31.96" height="9.40" fill="#000"/>
<rect x="261.80" y="662.64" width="29.96" height="6.40" fill="url(#bg20)"/>
<rect x="261.80" y="670.99" width="80.90" height="9.40" fill="#000"/>
<rect x="261.80" y="672.39" width="78.90" height="6.40" fill="url(#bg21)"/>
<rect x="261.80" y="680.75" width="46.32" height="9.40" fill="#000"/>
<rect x="261.80" y="682.15" width="44.32" height="6.40" fill="url(#bg22)"/>
<rect x="261.80" y="690.51" width="105.22" height="9.40" fill="#000"/>
<rect x="261.80" y="691.91" width="103.22" height="6.40" fill="url(#bg23)"/>
<rect x="261.80" y="700.26" width="57.75" height="9.40" fill="#000"/>
<rect x="261.80" y="701.66" width="55.75" height="6.40" fill="url(#bg24)"/>
<rect x="261.80" y="729.53" width="96.72" height="9.40" fill="#000"/>
<rect x="261.80" y="730.93" width="94.72" height="6.40" fill="url(#bg25)"/>
<rect x="261.80" y="739.28" width="26.11" height="9.40" fill="#000"/>
<rect x="261.80" y="740.68" width="24.11" height="6.40" fill="url(#bg26)"/>
<rect x="261.80" y="749.04" width="80.90" height="9.40" fill="#000"/>
<rect x="261.80" y="750.44" width="78.90" height="6.40" fill="url(#bg27)"/>
<rect x="261.80" y="758.79" width="38.12" height="9.40" fill="#000"/>
<rect x="261.80" y="760.19" width="36.12" height="6.40" fill="url(#bg28)"/>
<rect x="261.80" y="768.55" width="116.94" height="9.40" fill="#000"/>
<rect x="261.80" y="769.95" width="114.94" height="6.40" fill="url(#bg29)"/>
<rect x="261.80" y="778.30" width="77.09" height="9.40" fill="#000"/>
<rect x="261.80" y="779.70" width="75.09" height="6.40" fill="url(#bg30)"/>
<rect x="261.80" y="866.10" width="61.27" height="9.40" fill="#000"/>
<rect x="261.80" y="867.50" width="59.27" height="6.40" fill="url(#bgw)"/>
<defs><linearGradient id="ybar" x1="0" x2="0" y1="0" y2="1"><stop offset="0" stop-color="#d4d028"/><stop offset="0.25" stop-color="#c8c400"/><stop offset="0.6" stop-color="#c4c000"/><stop offset="1" stop-color="#6e6c00"/></linearGradient></defs>
<text x="861.0" y="326.0" font-size="21" fill="#d6d6d6" text-anchor="middle" textLength="64.0" lengthAdjust="spacingAndGlyphs">Delta L</text>
<rect x="777.00" y="334.80" width="205.00" height="398.20" fill="#232323"/>
<line x1="769.50" y1="334.80" x2="777.00" y2="334.80" stroke="#d4d4d4" stroke-width="2"/>
<text x="769.0" y="341.1" font-size="21" fill="#d6d6d6" text-anchor="end" textLength="22.5" lengthAdjust="spacingAndGlyphs">15</text>
<line x1="777.00" y1="400.60" x2="982.00" y2="400.60" stroke="#949494" stroke-width="1.5"/>
<line x1="769.50" y1="400.60" x2="777.00" y2="400.60" stroke="#d4d4d4" stroke-width="2"/>
<text x="769.0" y="406.9" font-size="21" fill="#d6d6d6" text-anchor="end" textLength="22.5" lengthAdjust="spacingAndGlyphs">10</text>
<line x1="777.00" y1="467.80" x2="982.00" y2="467.80" stroke="#949494" stroke-width="1.5"/>
<line x1="769.50" y1="467.80" x2="777.00" y2="467.80" stroke="#d4d4d4" stroke-width="2"/>
<text x="769.0" y="474.1" font-size="21" fill="#d6d6d6" text-anchor="end" textLength="11.0" lengthAdjust="spacingAndGlyphs">5</text>
<line x1="777.00" y1="535.90" x2="982.00" y2="535.90" stroke="#949494" stroke-width="1.5"/>
<line x1="769.50" y1="535.90" x2="777.00" y2="535.90" stroke="#d4d4d4" stroke-width="2"/>
<text x="769.0" y="542.2" font-size="21" fill="#d6d6d6" text-anchor="end" textLength="11.0" lengthAdjust="spacingAndGlyphs">0</text>
<line x1="777.00" y1="600.70" x2="982.00" y2="600.70" stroke="#949494" stroke-width="1.5"/>
<line x1="769.50" y1="600.70" x2="777.00" y2="600.70" stroke="#d4d4d4" stroke-width="2"/>
<text x="769.0" y="607.0" font-size="21" fill="#d6d6d6" text-anchor="end" textLength="18.5" lengthAdjust="spacingAndGlyphs">-5</text>
<line x1="777.00" y1="668.00" x2="982.00" y2="668.00" stroke="#949494" stroke-width="1.5"/>
<line x1="769.50" y1="668.00" x2="777.00" y2="668.00" stroke="#d4d4d4" stroke-width="2"/>
<text x="769.0" y="674.3" font-size="21" fill="#d6d6d6" text-anchor="end" textLength="30.0" lengthAdjust="spacingAndGlyphs">-10</text>
<line x1="769.50" y1="733.00" x2="777.00" y2="733.00" stroke="#d4d4d4" stroke-width="2"/>
<text x="769.0" y="739.3" font-size="21" fill="#d6d6d6" text-anchor="end" textLength="30.0" lengthAdjust="spacingAndGlyphs">-15</text>
<rect x="777.0" y="334.8" width="205.0" height="398.2" fill="none" stroke="#a0a0a0" stroke-width="1.6"/>
<line x1="777.00" y1="733.00" x2="777.00" y2="741.00" stroke="#d4d4d4" stroke-width="2"/>
<line x1="982.00" y1="733.00" x2="982.00" y2="741.00" stroke="#d4d4d4" stroke-width="2"/>
<text x="879.5" y="758.0" font-size="21" fill="#d6d6d6" text-anchor="middle" textLength="51.0" lengthAdjust="spacingAndGlyphs">100%</text>
<rect x="797.20" y="533.00" width="163.70" height="5.80" fill="#000"/>
<rect x="798.40" y="534.20" width="161.30" height="3.40" fill="url(#ybar)"/>
<text x="1140.0" y="326.0" font-size="21" fill="#d6d6d6" text-anchor="middle" textLength="67.0" lengthAdjust="spacingAndGlyphs">Delta C</text>
<rect x="1056.00" y="334.80" width="204.50" height="398.20" fill="#232323"/>
<line x1="1048.50" y1="334.80" x2="1056.00" y2="334.80" stroke="#d4d4d4" stroke-width="2"/>
<text x="1048.0" y="341.1" font-size="21" fill="#d6d6d6" text-anchor="end" textLength="22.5" lengthAdjust="spacingAndGlyphs">15</text>
<line x1="1056.00" y1="400.60" x2="1260.50" y2="400.60" stroke="#949494" stroke-width="1.5"/>
<line x1="1048.50" y1="400.60" x2="1056.00" y2="400.60" stroke="#d4d4d4" stroke-width="2"/>
<text x="1048.0" y="406.9" font-size="21" fill="#d6d6d6" text-anchor="end" textLength="22.5" lengthAdjust="spacingAndGlyphs">10</text>
<line x1="1056.00" y1="467.80" x2="1260.50" y2="467.80" stroke="#949494" stroke-width="1.5"/>
<line x1="1048.50" y1="467.80" x2="1056.00" y2="467.80" stroke="#d4d4d4" stroke-width="2"/>
<text x="1048.0" y="474.1" font-size="21" fill="#d6d6d6" text-anchor="end" textLength="11.0" lengthAdjust="spacingAndGlyphs">5</text>
<line x1="1056.00" y1="535.90" x2="1260.50" y2="535.90" stroke="#949494" stroke-width="1.5"/>
<line x1="1048.50" y1="535.90" x2="1056.00" y2="535.90" stroke="#d4d4d4" stroke-width="2"/>
<text x="1048.0" y="542.2" font-size="21" fill="#d6d6d6" text-anchor="end" textLength="11.0" lengthAdjust="spacingAndGlyphs">0</text>
<line x1="1056.00" y1="600.70" x2="1260.50" y2="600.70" stroke="#949494" stroke-width="1.5"/>
<line x1="1048.50" y1="600.70" x2="1056.00" y2="600.70" stroke="#d4d4d4" stroke-width="2"/>
<text x="1048.0" y="607.0" font-size="21" fill="#d6d6d6" text-anchor="end" textLength="18.5" lengthAdjust="spacingAndGlyphs">-5</text>
<line x1="1056.00" y1="668.00" x2="1260.50" y2="668.00" stroke="#949494" stroke-width="1.5"/>
<line x1="1048.50" y1="668.00" x2="1056.00" y2="668.00" stroke="#d4d4d4" stroke-width="2"/>
<text x="1048.0" y="674.3" font-size="21" fill="#d6d6d6" text-anchor="end" textLength="30.0" lengthAdjust="spacingAndGlyphs">-10</text>
<line x1="1048.50" y1="733.00" x2="1056.00" y2="733.00" stroke="#d4d4d4" stroke-width="2"/>
<text x="1048.0" y="739.3" font-size="21" fill="#d6d6d6" text-anchor="end" textLength="30.0" lengthAdjust="spacingAndGlyphs">-15</text>
<rect x="1056.0" y="334.8" width="204.5" height="398.2" fill="none" stroke="#a0a0a0" stroke-width="1.6"/>
<line x1="1056.00" y1="733.00" x2="1056.00" y2="741.00" stroke="#d4d4d4" stroke-width="2"/>
<line x1="1260.50" y1="733.00" x2="1260.50" y2="741.00" stroke="#d4d4d4" stroke-width="2"/>
<text x="1158.2" y="758.0" font-size="21" fill="#d6d6d6" text-anchor="middle" textLength="51.0" lengthAdjust="spacingAndGlyphs">100%</text>
<rect x="1077.00" y="517.30" width="162.60" height="17.50" fill="#000"/>
<rect x="1078.20" y="518.50" width="160.20" height="15.10" fill="url(#ybar)"/>
<text x="1419.0" y="326.0" font-size="21" fill="#d6d6d6" text-anchor="middle" textLength="68.0" lengthAdjust="spacingAndGlyphs">Delta H</text>
<rect x="1335.00" y="334.80" width="205.00" height="398.20" fill="#232323"/>
<line x1="1327.50" y1="334.80" x2="1335.00" y2="334.80" stroke="#d4d4d4" stroke-width="2"/>
<text x="1327.0" y="341.1" font-size="21" fill="#d6d6d6" text-anchor="end" textLength="22.5" lengthAdjust="spacingAndGlyphs">15</text>
<line x1="1335.00" y1="400.60" x2="1540.00" y2="400.60" stroke="#949494" stroke-width="1.5"/>
<line x1="1327.50" y1="400.60" x2="1335.00" y2="400.60" stroke="#d4d4d4" stroke-width="2"/>
<text x="1327.0" y="406.9" font-size="21" fill="#d6d6d6" text-anchor="end" textLength="22.5" lengthAdjust="spacingAndGlyphs">10</text>
<line x1="1335.00" y1="467.80" x2="1540.00" y2="467.80" stroke="#949494" stroke-width="1.5"/>
<line x1="1327.50" y1="467.80" x2="1335.00" y2="467.80" stroke="#d4d4d4" stroke-width="2"/>
<text x="1327.0" y="474.1" font-size="21" fill="#d6d6d6" text-anchor="end" textLength="11.0" lengthAdjust="spacingAndGlyphs">5</text>
<line x1="1335.00" y1="535.90" x2="1540.00" y2="535.90" stroke="#949494" stroke-width="1.5"/>
<line x1="1327.50" y1="535.90" x2="1335.00" y2="535.90" stroke="#d4d4d4" stroke-width="2"/>
<text x="1327.0" y="542.2" font-size="21" fill="#d6d6d6" text-anchor="end" textLength="11.0" lengthAdjust="spacingAndGlyphs">0</text>
<line x1="1335.00" y1="600.70" x2="1540.00" y2="600.70" stroke="#949494" stroke-width="1.5"/>
<line x1="1327.50" y1="600.70" x2="1335.00" y2="600.70" stroke="#d4d4d4" stroke-width="2"/>
<text x="1327.0" y="607.0" font-size="21" fill="#d6d6d6" text-anchor="end" textLength="18.5" lengthAdjust="spacingAndGlyphs">-5</text>
<line x1="1335.00" y1="668.00" x2="1540.00" y2="668.00" stroke="#949494" stroke-width="1.5"/>
<line x1="1327.50" y1="668.00" x2="1335.00" y2="668.00" stroke="#d4d4d4" stroke-width="2"/>
<text x="1327.0" y="674.3" font-size="21" fill="#d6d6d6" text-anchor="end" textLength="30.0" lengthAdjust="spacingAndGlyphs">-10</text>
<line x1="1327.50" y1="733.00" x2="1335.00" y2="733.00" stroke="#d4d4d4" stroke-width="2"/>
<text x="1327.0" y="739.3" font-size="21" fill="#d6d6d6" text-anchor="end" textLength="30.0" lengthAdjust="spacingAndGlyphs">-15</text>
<rect x="1335.0" y="334.8" width="205.0" height="398.2" fill="none" stroke="#a0a0a0" stroke-width="1.6"/>
<line x1="1335.00" y1="733.00" x2="1335.00" y2="741.00" stroke="#d4d4d4" stroke-width="2"/>
<line x1="1540.00" y1="733.00" x2="1540.00" y2="741.00" stroke="#d4d4d4" stroke-width="2"/>
<text x="1437.5" y="758.0" font-size="21" fill="#d6d6d6" text-anchor="middle" textLength="51.0" lengthAdjust="spacingAndGlyphs">100%</text>
<rect x="1356.30" y="533.60" width="162.30" height="44.80" fill="#000"/>
<rect x="1357.50" y="534.80" width="159.90" height="42.40" fill="url(#ybar)"/>
<rect x="730.50" y="770.50" width="837.50" height="230.50" fill="#000"/>
<rect x="760.00" y="780.50" width="141.00" height="188.00" fill="#fff"/>
<rect x="761.20" y="781.70" width="138.60" height="93.50" fill="#c4be9b"/>
<rect x="761.20" y="874.50" width="138.60" height="92.30" fill="#c1c19d"/>
<text x="830.5" y="989.0" font-size="16.5" fill="#fff" text-anchor="middle" textLength="33.0" lengthAdjust="spacingAndGlyphs">20%</text>
<rect x="923.55" y="780.50" width="141.00" height="188.00" fill="#fff"/>
<rect x="924.75" y="781.70" width="138.60" height="93.50" fill="#c4be7e"/>
<rect x="924.75" y="874.50" width="138.60" height="92.30" fill="#c2c083"/>
<text x="994.0" y="989.0" font-size="16.5" fill="#fff" text-anchor="middle" textLength="33.0" lengthAdjust="spacingAndGlyphs">40%</text>
<rect x="1087.10" y="780.50" width="141.00" height="188.00" fill="#fff"/>
<rect x="1088.30" y="781.70" width="138.60" height="93.50" fill="#c4bc5a"/>
<rect x="1088.30" y="874.50" width="138.60" height="92.30" fill="#c2be60"/>
<text x="1157.6" y="989.0" font-size="16.5" fill="#fff" text-anchor="middle" textLength="33.0" lengthAdjust="spacingAndGlyphs">60%</text>
<rect x="1250.65" y="780.50" width="141.00" height="188.00" fill="#fff"/>
<rect x="1251.85" y="781.70" width="138.60" height="93.50" fill="#c5bd2c"/>
<rect x="1251.85" y="874.50" width="138.60" height="92.30" fill="#c3c02c"/>
<text x="1321.2" y="989.0" font-size="16.5" fill="#fff" text-anchor="middle" textLength="33.0" lengthAdjust="spacingAndGlyphs">80%</text>
<rect x="1414.20" y="780.50" width="141.00" height="188.00" fill="#fff"/>
<rect x="1415.40" y="781.70" width="138.60" height="93.50" fill="#cac30a"/>
<rect x="1415.40" y="874.50" width="138.60" height="92.30" fill="#c6c406"/>
<text x="1484.7" y="989.0" font-size="16.5" fill="#fff" text-anchor="middle" textLength="42.5" lengthAdjust="spacingAndGlyphs">100%</text>
<text transform="translate(749,822) rotate(-90)" font-size="16.5" fill="#fff" text-anchor="middle" textLength="49" lengthAdjust="spacingAndGlyphs">Actual</text>
<text transform="translate(749,927) rotate(-90)" font-size="16.5" fill="#fff" text-anchor="middle" textLength="49" lengthAdjust="spacingAndGlyphs">Target</text>
<text x="271.5" y="1066.0" font-size="41.5" fill="#f2f2f2" textLength="329.5" lengthAdjust="spacingAndGlyphs">Avg dE2000: 2.34</text>
<text x="266.0" y="1123.0" font-size="41.5" fill="#f2f2f2" textLength="341.4" lengthAdjust="spacingAndGlyphs">Max dE2000: 3.97</text>
<text x="221.7" y="1190.6" font-size="41.5" fill="#f2f2f2" textLength="308.0" lengthAdjust="spacingAndGlyphs">Current Reading</text>
<text x="221.0" y="1240.4" font-size="34" fill="#f2f2f2" textLength="144.4" lengthAdjust="spacingAndGlyphs">x: 0.4448</text>
<text x="441.3" y="1240.4" font-size="34" fill="#f2f2f2" textLength="146.3" lengthAdjust="spacingAndGlyphs">y: 0.5316</text>
<text x="221.0" y="1299.0" font-size="34" fill="#f2f2f2" textLength="136.0" lengthAdjust="spacingAndGlyphs">fL: 55.16</text>
<text x="221.0" y="1346.0" font-size="34" fill="#f2f2f2" textLength="224.6" lengthAdjust="spacingAndGlyphs">cd/m²: 188.99</text>
<defs><linearGradient id="rbR" x1="0" x2="0" y1="0" y2="1"><stop offset="0" stop-color="#ff5c5c"/><stop offset="1" stop-color="#ff3a3a"/></linearGradient><linearGradient id="rbG" x1="0" x2="0" y1="0" y2="1"><stop offset="0" stop-color="#5eb45e"/><stop offset="1" stop-color="#44a644"/></linearGradient><linearGradient id="rbB" x1="0" x2="0" y1="0" y2="1"><stop offset="0" stop-color="#5858ff"/><stop offset="1" stop-color="#4646ff"/></linearGradient></defs>
<text x="860.0" y="1067.5" font-size="21" fill="#d6d6d6" text-anchor="middle" textLength="117.0" lengthAdjust="spacingAndGlyphs">RGB Balance</text>
<rect x="704.60" y="1075.00" width="354.40" height="254.70" fill="#232323"/>
<line x1="704.60" y1="1101.90" x2="1059.00" y2="1101.90" stroke="#949494" stroke-width="1.5"/>
<line x1="697.10" y1="1101.90" x2="704.60" y2="1101.90" stroke="#d4d4d4" stroke-width="2"/>
<text x="696.1" y="1107.7" font-size="21" fill="#d6d6d6" text-anchor="end" textLength="33.5" lengthAdjust="spacingAndGlyphs">104</text>
<line x1="704.60" y1="1153.70" x2="1059.00" y2="1153.70" stroke="#949494" stroke-width="1.5"/>
<line x1="697.10" y1="1153.70" x2="704.60" y2="1153.70" stroke="#d4d4d4" stroke-width="2"/>
<text x="696.1" y="1159.5" font-size="21" fill="#d6d6d6" text-anchor="end" textLength="33.5" lengthAdjust="spacingAndGlyphs">102</text>
<line x1="704.60" y1="1203.90" x2="1059.00" y2="1203.90" stroke="#949494" stroke-width="1.5"/>
<line x1="697.10" y1="1203.90" x2="704.60" y2="1203.90" stroke="#d4d4d4" stroke-width="2"/>
<text x="696.1" y="1209.7" font-size="21" fill="#d6d6d6" text-anchor="end" textLength="33.5" lengthAdjust="spacingAndGlyphs">100</text>
<line x1="704.60" y1="1255.60" x2="1059.00" y2="1255.60" stroke="#949494" stroke-width="1.5"/>
<line x1="697.10" y1="1255.60" x2="704.60" y2="1255.60" stroke="#d4d4d4" stroke-width="2"/>
<text x="696.1" y="1261.4" font-size="21" fill="#d6d6d6" text-anchor="end" textLength="22.5" lengthAdjust="spacingAndGlyphs">98</text>
<line x1="704.60" y1="1305.70" x2="1059.00" y2="1305.70" stroke="#949494" stroke-width="1.5"/>
<line x1="697.10" y1="1305.70" x2="704.60" y2="1305.70" stroke="#d4d4d4" stroke-width="2"/>
<text x="696.1" y="1311.5" font-size="21" fill="#d6d6d6" text-anchor="end" textLength="22.5" lengthAdjust="spacingAndGlyphs">96</text>
<rect x="704.6" y="1075.0" width="354.4" height="254.70000000000005" fill="none" stroke="#a0a0a0" stroke-width="1.6"/>
<line x1="704.60" y1="1329.70" x2="704.60" y2="1338.70" stroke="#d4d4d4" stroke-width="2"/>
<line x1="1059.00" y1="1329.70" x2="1059.00" y2="1338.70" stroke="#d4d4d4" stroke-width="2"/>
<rect x="739.30" y="1172.50" width="93.20" height="157.20" fill="#000"/>
<rect x="740.90" y="1174.30" width="90.60" height="155.40" fill="url(#rbR)"/>
<rect x="832.50" y="1221.00" width="94.00" height="108.70" fill="#000"/>
<rect x="834.10" y="1222.80" width="91.40" height="106.90" fill="url(#rbG)"/>
<rect x="926.50" y="1244.00" width="94.20" height="85.70" fill="#000"/>
<rect x="928.10" y="1245.80" width="91.60" height="83.90" fill="url(#rbB)"/>
<text x="881.5" y="1353.0" font-size="21" fill="#d6d6d6" text-anchor="middle" textLength="51.0" lengthAdjust="spacingAndGlyphs">100%</text>
<defs><linearGradient id="thdr" x1="0" x2="0" y1="0" y2="1"><stop offset="0" stop-color="#1d1d1d"/><stop offset="1" stop-color="#0e0e0e"/></linearGradient></defs>
<rect x="1086.80" y="1030.00" width="1031.70" height="333.50" fill="#000"/>
<rect x="1089.30" y="1032.70" width="1026.70" height="19.00" fill="#2d2d2d"/>
<rect x="1089.30" y="1051.70" width="1026.70" height="20.00" fill="url(#thdr)"/>
<text x="1439.5" y="1059.7" font-size="20.5" fill="#f4f4f4" text-anchor="middle" textLength="55.5" lengthAdjust="spacingAndGlyphs">20%</text>
<text x="1589.9" y="1059.7" font-size="20.5" fill="#f4f4f4" text-anchor="middle" textLength="55.5" lengthAdjust="spacingAndGlyphs">40%</text>
<text x="1740.3" y="1059.7" font-size="20.5" fill="#f4f4f4" text-anchor="middle" textLength="55.5" lengthAdjust="spacingAndGlyphs">60%</text>
<text x="1890.7" y="1059.7" font-size="20.5" fill="#f4f4f4" text-anchor="middle" textLength="55.5" lengthAdjust="spacingAndGlyphs">80%</text>
<text x="2041.1" y="1059.7" font-size="20.5" fill="#f4f4f4" text-anchor="middle" textLength="71.5" lengthAdjust="spacingAndGlyphs">100%</text>
<rect x="1089.30" y="1071.70" width="1026.70" height="36.60" fill="#424242"/>
<text x="1114.4" y="1098.0" font-size="22" fill="#f2f2f2" font-weight="bold" textLength="121.3" lengthAdjust="spacingAndGlyphs">x: CIE31</text>
<text x="1373.0" y="1098.0" font-size="22" fill="#f2f2f2" textLength="96.0" lengthAdjust="spacingAndGlyphs">0.3438</text>
<text x="1523.4" y="1098.0" font-size="22" fill="#f2f2f2" textLength="96.0" lengthAdjust="spacingAndGlyphs">0.3692</text>
<text x="1673.8" y="1098.0" font-size="22" fill="#f2f2f2" textLength="96.0" lengthAdjust="spacingAndGlyphs">0.3951</text>
<text x="1824.2" y="1098.0" font-size="22" fill="#f2f2f2" textLength="96.0" lengthAdjust="spacingAndGlyphs">0.4185</text>
<text x="1974.6" y="1098.0" font-size="22" fill="#f2f2f2" textLength="96.0" lengthAdjust="spacingAndGlyphs">0.4448</text>
<rect x="1089.30" y="1108.10" width="1026.70" height="36.60" fill="#828282"/>
<text x="1114.4" y="1134.4" font-size="22" fill="#f2f2f2" font-weight="bold" textLength="121.3" lengthAdjust="spacingAndGlyphs">y: CIE31</text>
<text x="1373.0" y="1134.4" font-size="22" fill="#f2f2f2" textLength="96.0" lengthAdjust="spacingAndGlyphs">0.3710</text>
<text x="1523.4" y="1134.4" font-size="22" fill="#f2f2f2" textLength="96.0" lengthAdjust="spacingAndGlyphs">0.4115</text>
<text x="1673.8" y="1134.4" font-size="22" fill="#f2f2f2" textLength="96.0" lengthAdjust="spacingAndGlyphs">0.4528</text>
<text x="1824.2" y="1134.4" font-size="22" fill="#f2f2f2" textLength="96.0" lengthAdjust="spacingAndGlyphs">0.4899</text>
<text x="1974.6" y="1134.4" font-size="22" fill="#f2f2f2" textLength="96.0" lengthAdjust="spacingAndGlyphs">0.5316</text>
<rect x="1089.30" y="1144.50" width="1026.70" height="36.60" fill="#424242"/>
<text x="1114.4" y="1170.8" font-size="22" fill="#f2f2f2" font-weight="bold" textLength="19.0" lengthAdjust="spacingAndGlyphs">Y</text>
<text x="1373.0" y="1170.8" font-size="22" fill="#f2f2f2" textLength="131.0" lengthAdjust="spacingAndGlyphs">196.9359</text>
<text x="1523.4" y="1170.8" font-size="22" fill="#f2f2f2" textLength="131.0" lengthAdjust="spacingAndGlyphs">194.6499</text>
<text x="1673.8" y="1170.8" font-size="22" fill="#f2f2f2" textLength="131.0" lengthAdjust="spacingAndGlyphs">192.4486</text>
<text x="1824.2" y="1170.8" font-size="22" fill="#f2f2f2" textLength="131.0" lengthAdjust="spacingAndGlyphs">190.2183</text>
<text x="1974.6" y="1170.8" font-size="22" fill="#f2f2f2" textLength="131.0" lengthAdjust="spacingAndGlyphs">188.9859</text>
<rect x="1089.30" y="1180.90" width="1026.70" height="36.60" fill="#828282"/>
<text x="1114.4" y="1207.2" font-size="22" fill="#f2f2f2" font-weight="bold" textLength="219.0" lengthAdjust="spacingAndGlyphs">Target x:CIE31</text>
<text x="1373.0" y="1207.2" font-size="22" fill="#f2f2f2" textLength="96.0" lengthAdjust="spacingAndGlyphs">0.3384</text>
<text x="1523.4" y="1207.2" font-size="22" fill="#f2f2f2" textLength="96.0" lengthAdjust="spacingAndGlyphs">0.3619</text>
<text x="1673.8" y="1207.2" font-size="22" fill="#f2f2f2" textLength="96.0" lengthAdjust="spacingAndGlyphs">0.3869</text>
<text x="1824.2" y="1207.2" font-size="22" fill="#f2f2f2" textLength="96.0" lengthAdjust="spacingAndGlyphs">0.4128</text>
<text x="1974.6" y="1207.2" font-size="22" fill="#f2f2f2" textLength="96.0" lengthAdjust="spacingAndGlyphs">0.4378</text>
<rect x="1089.30" y="1217.30" width="1026.70" height="36.60" fill="#424242"/>
<text x="1114.4" y="1243.6" font-size="22" fill="#f2f2f2" font-weight="bold" textLength="219.0" lengthAdjust="spacingAndGlyphs">Target y:CIE31</text>
<text x="1373.0" y="1243.6" font-size="22" fill="#f2f2f2" textLength="96.0" lengthAdjust="spacingAndGlyphs">0.3714</text>
<text x="1523.4" y="1243.6" font-size="22" fill="#f2f2f2" textLength="96.0" lengthAdjust="spacingAndGlyphs">0.4103</text>
<text x="1673.8" y="1243.6" font-size="22" fill="#f2f2f2" textLength="96.0" lengthAdjust="spacingAndGlyphs">0.4517</text>
<text x="1824.2" y="1243.6" font-size="22" fill="#f2f2f2" textLength="96.0" lengthAdjust="spacingAndGlyphs">0.4944</text>
<text x="1974.6" y="1243.6" font-size="22" fill="#f2f2f2" textLength="96.0" lengthAdjust="spacingAndGlyphs">0.5359</text>
<rect x="1089.30" y="1253.70" width="1026.70" height="36.60" fill="#828282"/>
<text x="1114.4" y="1280.0" font-size="22" fill="#f2f2f2" font-weight="bold" textLength="127.0" lengthAdjust="spacingAndGlyphs">Target Y</text>
<text x="1373.0" y="1280.0" font-size="22" fill="#f2f2f2" textLength="131.0" lengthAdjust="spacingAndGlyphs">201.7420</text>
<text x="1523.4" y="1280.0" font-size="22" fill="#f2f2f2" textLength="131.0" lengthAdjust="spacingAndGlyphs">198.1241</text>
<text x="1673.8" y="1280.0" font-size="22" fill="#f2f2f2" textLength="131.0" lengthAdjust="spacingAndGlyphs">195.0637</text>
<text x="1824.2" y="1280.0" font-size="22" fill="#f2f2f2" textLength="131.0" lengthAdjust="spacingAndGlyphs">192.5163</text>
<text x="1974.6" y="1280.0" font-size="22" fill="#f2f2f2" textLength="131.0" lengthAdjust="spacingAndGlyphs">190.4796</text>
<rect x="1089.30" y="1290.10" width="1026.70" height="36.60" fill="#424242"/>
<text x="1114.4" y="1316.4" font-size="22" fill="#f2f2f2" font-weight="bold" textLength="126.0" lengthAdjust="spacingAndGlyphs">ΔE 2000</text>
<text x="1373.0" y="1316.4" font-size="22" fill="#f2f2f2" textLength="96.0" lengthAdjust="spacingAndGlyphs">2.5926</text>
<text x="1523.4" y="1316.4" font-size="22" fill="#f2f2f2" textLength="96.0" lengthAdjust="spacingAndGlyphs">1.9319</text>
<text x="1673.8" y="1316.4" font-size="22" fill="#f2f2f2" textLength="96.0" lengthAdjust="spacingAndGlyphs">1.8324</text>
<text x="1824.2" y="1316.4" font-size="22" fill="#f2f2f2" textLength="96.0" lengthAdjust="spacingAndGlyphs">1.6210</text>
<text x="1974.6" y="1316.4" font-size="22" fill="#f2f2f2" textLength="96.0" lengthAdjust="spacingAndGlyphs">1.5414</text>
<rect x="1089.30" y="1326.50" width="1026.70" height="36.60" fill="#828282"/>
<text x="1114.4" y="1352.8" font-size="22" fill="#f2f2f2" font-weight="bold" textLength="100.0" lengthAdjust="spacingAndGlyphs">ΔE ITP</text>
<text x="1373.0" y="1352.8" font-size="22" fill="#f2f2f2" textLength="96.0" lengthAdjust="spacingAndGlyphs">3.8372</text>
<text x="1523.4" y="1352.8" font-size="22" fill="#f2f2f2" textLength="96.0" lengthAdjust="spacingAndGlyphs">4.2218</text>
<text x="1673.8" y="1352.8" font-size="22" fill="#f2f2f2" textLength="96.0" lengthAdjust="spacingAndGlyphs">4.6294</text>
<text x="1824.2" y="1352.8" font-size="22" fill="#f2f2f2" textLength="96.0" lengthAdjust="spacingAndGlyphs">3.7758</text>
<text x="1974.6" y="1352.8" font-size="22" fill="#f2f2f2" textLength="96.0" lengthAdjust="spacingAndGlyphs">4.0700</text>
<rect x="1577.00" y="231.00" width="983.00" height="789.50" fill="#1b1b1b"/>
<rect x="1587.00" y="241.00" width="962.50" height="769.50" fill="#333333"/>
<text x="2068.0" y="266.5" font-size="21" fill="#d6d6d6" text-anchor="middle" textLength="119.0" lengthAdjust="spacingAndGlyphs">CIE 1976 u'v'</text>
<rect x="1640.00" y="274.00" width="905.00" height="696.00" fill="#232323"/>
<defs><clipPath id="plotclip"><rect x="1640.0" y="274.0" width="905.0" height="696.0"/></clipPath>
<clipPath id="locclip"><path d="M2026.7,950.8 L2026.7,950.8 L2026.7,950.8 L2026.6,950.8 L2026.5,950.8 L2026.5,950.8 L2026.4,950.9 L2026.4,950.9 L2026.3,951.0 L2026.2,951.1 L2026.1,951.2 L2026.1,951.2 L2026.0,951.2 L2025.9,951.2 L2025.8,951.2 L2025.6,951.2 L2025.5,951.2 L2025.4,951.3 L2025.3,951.4 L2025.2,951.5 L2025.1,951.6 L2024.9,951.6 L2024.8,951.6 L2024.6,951.6 L2024.5,951.6 L2024.3,951.6 L2024.1,951.6 L2023.9,951.6 L2023.7,951.6 L2023.5,951.6 L2023.3,951.6 L2023.1,951.6 L2022.9,951.6 L2022.6,951.7 L2022.4,951.6 L2022.1,951.6 L2021.7,951.5 L2021.3,951.3 L2020.9,951.1 L2020.4,950.8 L2019.8,950.5 L2019.1,950.1 L2018.4,949.6 L2017.6,949.1 L2016.8,948.5 L2015.9,947.9 L2015.0,947.2 L2014.0,946.5 L2013.0,945.7 L2011.9,944.8 L2010.6,943.8 L2009.3,942.8 L2007.8,941.6 L2006.3,940.4 L2004.7,939.1 L2003.0,937.7 L2001.2,936.2 L1999.4,934.6 L1997.5,933.0 L1995.5,931.3 L1993.4,929.5 L1991.2,927.7 L1988.9,925.8 L1986.5,923.8 L1984.0,921.7 L1981.2,919.5 L1978.4,917.1 L1975.3,914.6 L1972.1,912.0 L1968.8,909.3 L1965.3,906.4 L1961.8,903.5 L1958.1,900.5 L1954.3,897.3 L1950.3,894.0 L1946.1,890.4 L1941.8,886.6 L1937.3,882.7 L1932.6,878.5 L1927.7,874.0 L1922.6,869.2 L1917.4,864.2 L1912.1,859.0 L1906.5,853.5 L1900.6,847.4 L1894.3,840.5 L1887.5,832.8 L1880.3,824.4 L1872.7,815.4 L1864.9,805.7 L1856.8,795.3 L1848.4,784.3 L1839.7,772.5 L1830.8,760.1 L1821.7,747.1 L1812.5,733.5 L1803.1,719.2 L1793.5,704.2 L1783.7,688.6 L1774.0,672.7 L1764.4,656.7 L1754.9,640.4 L1745.3,623.7 L1735.9,606.8 L1726.8,590.0 L1718.2,573.5 L1710.1,557.1 L1702.4,540.7 L1695.2,524.6 L1688.4,508.8 L1682.0,493.7 L1676.2,479.1 L1670.8,465.0 L1665.9,451.5 L1661.5,438.5 L1657.5,426.4 L1654.1,415.0 L1651.1,404.4 L1648.7,394.5 L1646.6,385.1 L1644.8,376.4 L1643.5,368.3 L1642.5,360.8 L1642.0,354.0 L1641.7,347.6 L1641.8,341.6 L1642.1,335.9 L1642.8,330.8 L1643.8,326.1 L1645.1,321.7 L1646.6,317.6 L1648.4,313.9 L1650.5,310.6 L1652.8,307.6 L1655.4,304.9 L1658.1,302.4 L1661.0,300.3 L1664.2,298.6 L1667.5,297.1 L1670.9,295.8 L1674.4,294.7 L1678.1,293.8 L1681.9,293.1 L1685.8,292.6 L1689.8,292.2 L1693.9,291.8 L1698.0,291.5 L1702.2,291.3 L1706.5,291.2 L1710.8,291.2 L1715.1,291.1 L1719.3,291.1 L1723.6,291.1 L1727.9,291.2 L1732.2,291.3 L1736.6,291.4 L1741.0,291.5 L1745.4,291.7 L1749.9,291.9 L1754.4,292.2 L1759.0,292.4 L1763.7,292.7 L1768.5,293.1 L1773.3,293.4 L1778.2,293.8 L1783.2,294.2 L1788.3,294.6 L1793.5,295.1 L1798.7,295.5 L1804.0,296.0 L1809.5,296.5 L1815.1,297.1 L1820.7,297.6 L1826.5,298.2 L1832.4,298.8 L1838.4,299.5 L1844.5,300.1 L1850.8,300.8 L1857.2,301.5 L1863.7,302.2 L1870.4,302.9 L1877.2,303.6 L1884.1,304.4 L1891.2,305.2 L1898.4,306.0 L1905.8,306.8 L1913.3,307.7 L1921.0,308.5 L1928.9,309.4 L1936.9,310.3 L1945.0,311.2 L1953.3,312.2 L1961.8,313.2 L1970.4,314.1 L1979.2,315.1 L1988.1,316.2 L1997.2,317.2 L2006.4,318.3 L2015.8,319.4 L2025.4,320.5 L2035.1,321.6 L2044.9,322.7 L2054.9,323.9 L2065.1,325.0 L2075.4,326.2 L2085.8,327.4 L2096.3,328.6 L2106.9,329.8 L2117.7,331.0 L2128.5,332.3 L2139.4,333.5 L2150.3,334.8 L2161.4,336.1 L2172.5,337.3 L2183.5,338.6 L2194.4,339.9 L2205.3,341.1 L2216.0,342.3 L2226.7,343.6 L2237.3,344.8 L2247.8,346.0 L2258.4,347.2 L2269.0,348.4 L2279.4,349.6 L2289.7,350.8 L2299.8,351.9 L2309.6,353.1 L2319.2,354.2 L2328.7,355.2 L2337.9,356.3 L2346.9,357.3 L2355.6,358.3 L2364.2,359.3 L2372.5,360.3 L2380.6,361.2 L2388.5,362.1 L2396.0,363.0 L2403.4,363.8 L2410.4,364.6 L2417.3,365.4 L2423.9,366.2 L2430.3,366.9 L2436.4,367.6 L2442.3,368.3 L2448.0,368.9 L2453.5,369.5 L2458.9,370.2 L2464.0,370.7 L2469.0,371.3 L2473.8,371.9 L2478.5,372.4 L2483.1,373.0 L2487.6,373.5 L2491.9,374.0 L2496.1,374.4 L2500.2,374.9 L2504.1,375.4 L2507.9,375.8 L2511.6,376.2 L2515.1,376.6 L2518.5,377.0 L2521.8,377.4 L2524.9,377.7 L2527.8,378.1 L2530.6,378.4 L2533.3,378.7 L2535.9,379.0 L2538.3,379.3 L2540.6,379.5 L2542.8,379.8 L2544.8,380.0 L2546.8,380.2 L2548.7,380.5 L2550.5,380.7 L2552.2,380.9 L2553.8,381.0 L2555.3,381.2 L2556.8,381.4 L2558.1,381.5 L2559.3,381.7 L2560.5,381.8 L2561.5,381.9 L2562.5,382.0 L2563.3,382.1 L2564.1,382.2 L2564.9,382.3 L2565.6,382.4 L2566.4,382.5 L2567.1,382.6 L2567.8,382.7 L2568.5,382.7 L2569.1,382.8 L2569.6,382.9 L2570.2,382.9 L2570.7,383.0 L2571.3,383.1 L2571.8,383.1 L2572.4,383.2 L2573.0,383.3 L2573.6,383.3 L2574.1,383.4 L2574.6,383.4 L2575.1,383.5 L2575.6,383.6 L2576.1,383.6 L2576.5,383.7 L2576.9,383.7 L2577.3,383.7 L2577.6,383.8 L2577.9,383.8 L2578.1,383.8 L2578.4,383.9 L2578.5,383.9 L2578.7,383.9 L2578.8,383.9 L2579.0,383.9 L2579.1,384.0 L2579.2,384.0 L2579.3,384.0 L2579.3,384.0 L2579.4,384.0 Z"/></clipPath>
<filter id="soft" x="-2%" y="-2%" width="104%" height="104%"><feGaussianBlur stdDeviation="1.2"/></filter></defs>
<g clip-path="url(#plotclip)"><g clip-path="url(#locclip)">
<g style="isolation:isolate">
<rect x="1635.00" y="269.00" width="915.00" height="706.00" fill="#000"/>
<clipPath id="ccone0"><polygon points="1936.7,428.3 3460.6,1726.6 5538.0,-101.5 2017.3,-455.6"/></clipPath>
<clipPath id="ccone1"><polygon points="1938.2,428.5 2024.4,-455.0 741.2,-584.0 1015.5,567.6"/></clipPath>
<clipPath id="ccone2"><polygon points="1937.9,427.3 1014.4,560.2 1667.8,3301.4 3470.9,1714.4"/></clipPath>
<g style="mix-blend-mode:screen">
<polygon points="1936.7,428.3 3460.6,1726.6 5538.0,-101.5 2017.3,-455.6" fill="#ff0000"/>
<g clip-path="url(#ccone1)">
<polygon points="1904.1,787.3 1209.1,-2126.8 1249.6,-2122.7" fill="#020000"/><polygon points="1904.1,787.3 1229.4,-2124.7 1269.4,-2120.7" fill="#060000"/><polygon points="1904.1,787.3 1249.6,-2122.7 1289.1,-2118.7" fill="#0a0000"/><polygon points="1904.1,787.3 1269.4,-2120.7 1308.5,-2116.8" fill="#0e0000"/><polygon points="1904.1,787.3 1289.1,-2118.7 1327.8,-2114.9" fill="#120000"/><polygon points="1904.1,787.3 1308.5,-2116.8 1346.8,-2112.9" fill="#160000"/><polygon points="1904.1,787.3 1327.8,-2114.9 1365.6,-2111.1" fill="#1a0000"/><polygon points="1904.1,787.3 1346.8,-2112.9 1384.2,-2109.2" fill="#1e0000"/><polygon points="1904.1,787.3 1365.6,-2111.1 1402.6,-2107.3" fill="#220000"/><polygon points="1904.1,787.3 1384.2,-2109.2 1420.8,-2105.5" fill="#260000"/><polygon points="1904.1,787.3 1402.6,-2107.3 1438.9,-2103.7" fill="#2a0000"/><polygon points="1904.1,787.3 1420.8,-2105.5 1456.7,-2101.9" fill="#2e0000"/><polygon points="1904.1,787.3 1438.9,-2103.7 1474.3,-2100.1" fill="#320000"/><polygon points="1904.1,787.3 1456.7,-2101.9 1491.8,-2098.4" fill="#360000"/><polygon points="1904.1,787.3 1474.3,-2100.1 1509.1,-2096.6" fill="#3a0000"/><polygon points="1904.1,787.3 1491.8,-2098.4 1526.2,-2094.9" fill="#3e0000"/><polygon points="1904.1,787.3 1509.1,-2096.6 1543.1,-2093.2" fill="#420000"/><polygon points="1904.1,787.3 1526.2,-2094.9 1559.8,-2091.5" fill="#460000"/><polygon points="1904.1,787.3 1543.1,-2093.2 1576.4,-2089.9" fill="#4a0000"/><polygon points="1904.1,787.3 1559.8,-2091.5 1592.8,-2088.2" fill="#4e0000"/><polygon points="1904.1,787.3 1576.4,-2089.9 1609.0,-2086.6" fill="#520000"/><polygon points="1904.1,787.3 1592.8,-2088.2 1625.1,-2084.9" fill="#560000"/><polygon points="1904.1,787.3 1609.0,-2086.6 1641.0,-2083.3" fill="#5a0000"/><polygon points="1904.1,787.3 1625.1,-2084.9 1656.8,-2081.8" fill="#5e0000"/><polygon points="1904.1,787.3 1641.0,-2083.3 1672.4,-2080.2" fill="#620000"/><polygon points="1904.1,787.3 1656.8,-2081.8 1687.8,-2078.6" fill="#660000"/><polygon points="1904.1,787.3 1672.4,-2080.2 1703.1,-2077.1" fill="#6a0000"/><polygon points="1904.1,787.3 1687.8,-2078.6 1718.3,-2075.6" fill="#6e0000"/><polygon points="1904.1,787.3 1703.1,-2077.1 1733.3,-2074.1" fill="#720000"/><polygon points="1904.1,787.3 1718.3,-2075.6 1748.1,-2072.6" fill="#760000"/><polygon points="1904.1,787.3 1733.3,-2074.1 1762.9,-2071.1" fill="#7a0000"/><polygon points="1904.1,787.3 1748.1,-2072.6 1777.4,-2069.6" fill="#7e0000"/><polygon points="1904.1,787.3 1762.9,-2071.1 1791.9,-2068.2" fill="#810000"/><polygon points="1904.1,787.3 1777.4,-2069.6 1806.2,-2066.7" fill="#850000"/><polygon points="1904.1,787.3 1791.9,-2068.2 1820.3,-2065.3" fill="#890000"/><polygon points="1904.1,787.3 1806.2,-2066.7 1834.3,-2063.9" fill="#8d0000"/><polygon points="1904.1,787.3 1820.3,-2065.3 1848.2,-2062.5" fill="#910000"/><polygon points="1904.1,787.3 1834.3,-2063.9 1862.0,-2061.1" fill="#950000"/><polygon points="1904.1,787.3 1848.2,-2062.5 1875.6,-2059.8" fill="#990000"/><polygon points="1904.1,787.3 1862.0,-2061.1 1889.2,-2058.4" fill="#9d0000"/><polygon points="1904.1,787.3 1875.6,-2059.8 1902.5,-2057.0" fill="#a10000"/><polygon points="1904.1,787.3 1889.2,-2058.4 1915.8,-2055.7" fill="#a50000"/><polygon points="1904.1,787.3 1902.5,-2057.0 1929.0,-2054.4" fill="#a90000"/><polygon points="1904.1,787.3 1915.8,-2055.7 1942.0,-2053.1" fill="#ad0000"/><polygon points="1904.1,787.3 1929.0,-2054.4 1954.9,-2051.8" fill="#b10000"/><polygon points="1904.1,787.3 1942.0,-2053.1 1967.7,-2050.5" fill="#b50000"/><polygon points="1904.1,787.3 1954.9,-2051.8 1980.4,-2049.2" fill="#b90000"/><polygon points="1904.1,787.3 1967.7,-2050.5 1992.9,-2048.0" fill="#bd0000"/><polygon points="1904.1,787.3 1980.4,-2049.2 2005.4,-2046.7" fill="#c10000"/><polygon points="1904.1,787.3 1992.9,-2048.0 2017.7,-2045.5" fill="#c50000"/><polygon points="1904.1,787.3 2005.4,-2046.7 2030.0,-2044.2" fill="#c90000"/><polygon points="1904.1,787.3 2017.7,-2045.5 2042.1,-2043.0" fill="#cd0000"/><polygon points="1904.1,787.3 2030.0,-2044.2 2054.1,-2041.8" fill="#d10000"/><polygon points="1904.1,787.3 2042.1,-2043.0 2066.1,-2040.6" fill="#d50000"/><polygon points="1904.1,787.3 2054.1,-2041.8 2077.9,-2039.4" fill="#d90000"/><polygon points="1904.1,787.3 2066.1,-2040.6 2089.6,-2038.2" fill="#dd0000"/><polygon points="1904.1,787.3 2077.9,-2039.4 2101.2,-2037.1" fill="#e10000"/><polygon points="1904.1,787.3 2089.6,-2038.2 2112.7,-2035.9" fill="#e50000"/><polygon points="1904.1,787.3 2101.2,-2037.1 2124.1,-2034.8" fill="#e90000"/><polygon points="1904.1,787.3 2112.7,-2035.9 2135.5,-2033.6" fill="#ed0000"/><polygon points="1904.1,787.3 2124.1,-2034.8 2146.7,-2032.5" fill="#f10000"/><polygon points="1904.1,787.3 2135.5,-2033.6 2157.8,-2031.4" fill="#f50000"/><polygon points="1904.1,787.3 2146.7,-2032.5 2210.4,-2026.1" fill="#f90000"/><polygon points="1904.1,787.3 2157.8,-2031.4 2210.4,-2026.1" fill="#fd0000"/>
</g>
<g clip-path="url(#ccone2)">
<polygon points="1788.2,301.6 2483.2,3215.7 2559.8,3148.4" fill="#020000"/><polygon points="1788.2,301.6 2522.0,3181.6 2596.6,3116.0" fill="#060000"/><polygon points="1788.2,301.6 2559.8,3148.4 2632.5,3084.5" fill="#0a0000"/><polygon points="1788.2,301.6 2596.6,3116.0 2667.5,3053.7" fill="#0e0000"/><polygon points="1788.2,301.6 2632.5,3084.5 2701.6,3023.8" fill="#120000"/><polygon points="1788.2,301.6 2667.5,3053.7 2734.8,2994.5" fill="#160000"/><polygon points="1788.2,301.6 2701.6,3023.8 2767.2,2966.0" fill="#1a0000"/><polygon points="1788.2,301.6 2734.8,2994.5 2798.9,2938.2" fill="#1e0000"/><polygon points="1788.2,301.6 2767.2,2966.0 2829.7,2911.0" fill="#220000"/><polygon points="1788.2,301.6 2798.9,2938.2 2859.9,2884.5" fill="#260000"/><polygon points="1788.2,301.6 2829.7,2911.0 2889.3,2858.6" fill="#2a0000"/><polygon points="1788.2,301.6 2859.9,2884.5 2918.1,2833.3" fill="#2e0000"/><polygon points="1788.2,301.6 2889.3,2858.6 2946.2,2808.6" fill="#320000"/><polygon points="1788.2,301.6 2918.1,2833.3 2973.7,2784.4" fill="#360000"/><polygon points="1788.2,301.6 2946.2,2808.6 3000.6,2760.8" fill="#3a0000"/><polygon points="1788.2,301.6 2973.7,2784.4 3026.9,2737.7" fill="#3e0000"/><polygon points="1788.2,301.6 3000.6,2760.8 3052.6,2715.1" fill="#420000"/><polygon points="1788.2,301.6 3026.9,2737.7 3077.7,2693.0" fill="#460000"/><polygon points="1788.2,301.6 3052.6,2715.1 3102.4,2671.3" fill="#4a0000"/><polygon points="1788.2,301.6 3077.7,2693.0 3126.5,2650.1" fill="#4e0000"/><polygon points="1788.2,301.6 3102.4,2671.3 3150.0,2629.4" fill="#520000"/><polygon points="1788.2,301.6 3126.5,2650.1 3173.2,2609.1" fill="#560000"/><polygon points="1788.2,301.6 3150.0,2629.4 3195.8,2589.2" fill="#5a0000"/><polygon points="1788.2,301.6 3173.2,2609.1 3218.0,2569.7" fill="#5e0000"/><polygon points="1788.2,301.6 3195.8,2589.2 3239.7,2550.6" fill="#620000"/><polygon points="1788.2,301.6 3218.0,2569.7 3261.0,2531.9" fill="#660000"/><polygon points="1788.2,301.6 3239.7,2550.6 3281.9,2513.5" fill="#6a0000"/><polygon points="1788.2,301.6 3261.0,2531.9 3302.3,2495.5" fill="#6e0000"/><polygon points="1788.2,301.6 3281.9,2513.5 3322.4,2477.8" fill="#720000"/><polygon points="1788.2,301.6 3302.3,2495.5 3342.1,2460.5" fill="#760000"/><polygon points="1788.2,301.6 3322.4,2477.8 3361.4,2443.5" fill="#7a0000"/><polygon points="1788.2,301.6 3342.1,2460.5 3380.4,2426.9" fill="#7e0000"/><polygon points="1788.2,301.6 3361.4,2443.5 3399.0,2410.5" fill="#810000"/><polygon points="1788.2,301.6 3380.4,2426.9 3417.3,2394.4" fill="#850000"/><polygon points="1788.2,301.6 3399.0,2410.5 3435.2,2378.7" fill="#890000"/><polygon points="1788.2,301.6 3417.3,2394.4 3452.8,2363.2" fill="#8d0000"/><polygon points="1788.2,301.6 3435.2,2378.7 3470.1,2348.0" fill="#910000"/><polygon points="1788.2,301.6 3452.8,2363.2 3487.1,2333.0" fill="#950000"/><polygon points="1788.2,301.6 3470.1,2348.0 3503.8,2318.4" fill="#990000"/><polygon points="1788.2,301.6 3487.1,2333.0 3520.2,2303.9" fill="#9d0000"/><polygon points="1788.2,301.6 3503.8,2318.4 3536.3,2289.8" fill="#a10000"/><polygon points="1788.2,301.6 3520.2,2303.9 3552.2,2275.8" fill="#a50000"/><polygon points="1788.2,301.6 3536.3,2289.8 3567.7,2262.1" fill="#a90000"/><polygon points="1788.2,301.6 3552.2,2275.8 3583.0,2248.7" fill="#ad0000"/><polygon points="1788.2,301.6 3567.7,2262.1 3598.1,2235.4" fill="#b10000"/><polygon points="1788.2,301.6 3583.0,2248.7 3612.9,2222.4" fill="#b50000"/><polygon points="1788.2,301.6 3598.1,2235.4 3627.5,2209.6" fill="#b90000"/><polygon points="1788.2,301.6 3612.9,2222.4 3641.8,2197.0" fill="#bd0000"/><polygon points="1788.2,301.6 3627.5,2209.6 3655.9,2184.6" fill="#c10000"/><polygon points="1788.2,301.6 3641.8,2197.0 3669.7,2172.4" fill="#c50000"/><polygon points="1788.2,301.6 3655.9,2184.6 3683.4,2160.4" fill="#c90000"/><polygon points="1788.2,301.6 3669.7,2172.4 3696.8,2148.6" fill="#cd0000"/><polygon points="1788.2,301.6 3683.4,2160.4 3710.0,2137.0" fill="#d10000"/><polygon points="1788.2,301.6 3696.8,2148.6 3723.1,2125.6" fill="#d50000"/><polygon points="1788.2,301.6 3710.0,2137.0 3735.9,2114.3" fill="#d90000"/><polygon points="1788.2,301.6 3723.1,2125.6 3748.5,2103.2" fill="#dd0000"/><polygon points="1788.2,301.6 3735.9,2114.3 3760.9,2092.3" fill="#e10000"/><polygon points="1788.2,301.6 3748.5,2103.2 3773.1,2081.5" fill="#e50000"/><polygon points="1788.2,301.6 3760.9,2092.3 3785.2,2070.9" fill="#e90000"/><polygon points="1788.2,301.6 3773.1,2081.5 3797.1,2060.5" fill="#ed0000"/><polygon points="1788.2,301.6 3785.2,2070.9 3808.8,2050.2" fill="#f10000"/><polygon points="1788.2,301.6 3797.1,2060.5 3820.3,2040.0" fill="#f50000"/><polygon points="1788.2,301.6 3808.8,2050.2 3873.8,1993.0" fill="#f90000"/><polygon points="1788.2,301.6 3820.3,2040.0 3873.8,1993.0" fill="#fd0000"/>
</g>
</g>
<g style="mix-blend-mode:screen">
<polygon points="1938.2,428.5 2024.4,-455.0 741.2,-584.0 1015.5,567.6" fill="#00ff00"/>
<g clip-path="url(#ccone0)">
<polygon points="1904.1,787.3 4806.7,-1764.9 4522.2,-1793.6" fill="#000200"/><polygon points="1904.1,787.3 4658.6,-1779.8 4396.1,-1806.2" fill="#000600"/><polygon points="1904.1,787.3 4522.2,-1793.6 4279.3,-1818.0" fill="#000a00"/><polygon points="1904.1,787.3 4396.1,-1806.2 4170.8,-1828.9" fill="#000e00"/><polygon points="1904.1,787.3 4279.3,-1818.0 4069.7,-1839.1" fill="#001200"/><polygon points="1904.1,787.3 4170.8,-1828.9 3975.2,-1848.6" fill="#001600"/><polygon points="1904.1,787.3 4069.7,-1839.1 3886.8,-1857.5" fill="#001a00"/><polygon points="1904.1,787.3 3975.2,-1848.6 3803.9,-1865.8" fill="#001e00"/><polygon points="1904.1,787.3 3886.8,-1857.5 3725.9,-1873.6" fill="#002200"/><polygon points="1904.1,787.3 3803.9,-1865.8 3652.5,-1881.0" fill="#002600"/><polygon points="1904.1,787.3 3725.9,-1873.6 3583.3,-1888.0" fill="#002a00"/><polygon points="1904.1,787.3 3652.5,-1881.0 3517.8,-1894.6" fill="#002e00"/><polygon points="1904.1,787.3 3583.3,-1888.0 3455.9,-1900.8" fill="#003200"/><polygon points="1904.1,787.3 3517.8,-1894.6 3397.2,-1906.7" fill="#003600"/><polygon points="1904.1,787.3 3455.9,-1900.8 3341.5,-1912.3" fill="#003a00"/><polygon points="1904.1,787.3 3397.2,-1906.7 3288.6,-1917.6" fill="#003e00"/><polygon points="1904.1,787.3 3341.5,-1912.3 3238.2,-1922.7" fill="#004200"/><polygon points="1904.1,787.3 3288.6,-1917.6 3190.2,-1927.5" fill="#004600"/><polygon points="1904.1,787.3 3238.2,-1922.7 3144.5,-1932.1" fill="#004a00"/><polygon points="1904.1,787.3 3190.2,-1927.5 3100.8,-1936.5" fill="#004e00"/><polygon points="1904.1,787.3 3144.5,-1932.1 3059.0,-1940.7" fill="#005200"/><polygon points="1904.1,787.3 3100.8,-1936.5 3019.0,-1944.7" fill="#005600"/><polygon points="1904.1,787.3 3059.0,-1940.7 2980.8,-1948.6" fill="#005a00"/><polygon points="1904.1,787.3 3019.0,-1944.7 2944.1,-1952.3" fill="#005e00"/><polygon points="1904.1,787.3 2980.8,-1948.6 2908.9,-1955.8" fill="#006200"/><polygon points="1904.1,787.3 2944.1,-1952.3 2875.1,-1959.2" fill="#006600"/><polygon points="1904.1,787.3 2908.9,-1955.8 2842.6,-1962.5" fill="#006a00"/><polygon points="1904.1,787.3 2875.1,-1959.2 2811.3,-1965.6" fill="#006e00"/><polygon points="1904.1,787.3 2842.6,-1962.5 2781.3,-1968.7" fill="#007200"/><polygon points="1904.1,787.3 2811.3,-1965.6 2752.3,-1971.6" fill="#007600"/><polygon points="1904.1,787.3 2781.3,-1968.7 2724.4,-1974.4" fill="#007a00"/><polygon points="1904.1,787.3 2752.3,-1971.6 2697.5,-1977.1" fill="#007e00"/><polygon points="1904.1,787.3 2724.4,-1974.4 2671.5,-1979.7" fill="#008100"/><polygon points="1904.1,787.3 2697.5,-1977.1 2646.4,-1982.2" fill="#008500"/><polygon points="1904.1,787.3 2671.5,-1979.7 2622.2,-1984.7" fill="#008900"/><polygon points="1904.1,787.3 2646.4,-1982.2 2598.7,-1987.0" fill="#008d00"/><polygon points="1904.1,787.3 2622.2,-1984.7 2576.0,-1989.3" fill="#009100"/><polygon points="1904.1,787.3 2598.7,-1987.0 2554.1,-1991.5" fill="#009500"/><polygon points="1904.1,787.3 2576.0,-1989.3 2532.8,-1993.6" fill="#009900"/><polygon points="1904.1,787.3 2554.1,-1991.5 2512.3,-1995.7" fill="#009d00"/><polygon points="1904.1,787.3 2532.8,-1993.6 2492.3,-1997.7" fill="#00a100"/><polygon points="1904.1,787.3 2512.3,-1995.7 2472.9,-1999.7" fill="#00a500"/><polygon points="1904.1,787.3 2492.3,-1997.7 2454.2,-2001.6" fill="#00a900"/><polygon points="1904.1,787.3 2472.9,-1999.7 2435.9,-2003.4" fill="#00ad00"/><polygon points="1904.1,787.3 2454.2,-2001.6 2418.2,-2005.2" fill="#00b100"/><polygon points="1904.1,787.3 2435.9,-2003.4 2401.0,-2006.9" fill="#00b500"/><polygon points="1904.1,787.3 2418.2,-2005.2 2384.3,-2008.6" fill="#00b900"/><polygon points="1904.1,787.3 2401.0,-2006.9 2368.0,-2010.2" fill="#00bd00"/><polygon points="1904.1,787.3 2384.3,-2008.6 2352.2,-2011.8" fill="#00c100"/><polygon points="1904.1,787.3 2368.0,-2010.2 2336.8,-2013.4" fill="#00c500"/><polygon points="1904.1,787.3 2352.2,-2011.8 2321.9,-2014.9" fill="#00c900"/><polygon points="1904.1,787.3 2336.8,-2013.4 2307.3,-2016.3" fill="#00cd00"/><polygon points="1904.1,787.3 2321.9,-2014.9 2293.1,-2017.8" fill="#00d100"/><polygon points="1904.1,787.3 2307.3,-2016.3 2279.2,-2019.2" fill="#00d500"/><polygon points="1904.1,787.3 2293.1,-2017.8 2265.7,-2020.5" fill="#00d900"/><polygon points="1904.1,787.3 2279.2,-2019.2 2252.6,-2021.8" fill="#00dd00"/><polygon points="1904.1,787.3 2265.7,-2020.5 2239.7,-2023.1" fill="#00e100"/><polygon points="1904.1,787.3 2252.6,-2021.8 2227.2,-2024.4" fill="#00e500"/><polygon points="1904.1,787.3 2239.7,-2023.1 2215.0,-2025.6" fill="#00e900"/><polygon points="1904.1,787.3 2227.2,-2024.4 2203.0,-2026.8" fill="#00ed00"/><polygon points="1904.1,787.3 2215.0,-2025.6 2191.4,-2028.0" fill="#00f100"/><polygon points="1904.1,787.3 2203.0,-2026.8 2180.0,-2029.1" fill="#00f500"/><polygon points="1904.1,787.3 2191.4,-2028.0 2128.4,-2034.3" fill="#00f900"/><polygon points="1904.1,787.3 2180.0,-2029.1 2128.4,-2034.3" fill="#00fd00"/>
</g>
<g clip-path="url(#ccone2)">
<polygon points="2387.8,361.9 -514.8,2914.2 -563.0,2712.1" fill="#000200"/><polygon points="2387.8,361.9 -539.8,2809.5 -584.7,2621.2" fill="#000600"/><polygon points="2387.8,361.9 -563.0,2712.1 -604.9,2536.2" fill="#000a00"/><polygon points="2387.8,361.9 -584.7,2621.2 -623.9,2456.5" fill="#000e00"/><polygon points="2387.8,361.9 -604.9,2536.2 -641.8,2381.7" fill="#001200"/><polygon points="2387.8,361.9 -623.9,2456.5 -658.6,2311.4" fill="#001600"/><polygon points="2387.8,361.9 -641.8,2381.7 -674.4,2245.0" fill="#001a00"/><polygon points="2387.8,361.9 -658.6,2311.4 -689.3,2182.4" fill="#001e00"/><polygon points="2387.8,361.9 -674.4,2245.0 -703.5,2123.1" fill="#002200"/><polygon points="2387.8,361.9 -689.3,2182.4 -716.8,2067.0" fill="#002600"/><polygon points="2387.8,361.9 -703.5,2123.1 -729.5,2013.8" fill="#002a00"/><polygon points="2387.8,361.9 -716.8,2067.0 -741.6,1963.3" fill="#002e00"/><polygon points="2387.8,361.9 -729.5,2013.8 -753.0,1915.2" fill="#003200"/><polygon points="2387.8,361.9 -741.6,1963.3 -764.0,1869.4" fill="#003600"/><polygon points="2387.8,361.9 -753.0,1915.2 -774.4,1825.8" fill="#003a00"/><polygon points="2387.8,361.9 -764.0,1869.4 -784.3,1784.1" fill="#003e00"/><polygon points="2387.8,361.9 -774.4,1825.8 -793.8,1744.3" fill="#004200"/><polygon points="2387.8,361.9 -784.3,1784.1 -802.9,1706.3" fill="#004600"/><polygon points="2387.8,361.9 -793.8,1744.3 -811.5,1669.9" fill="#004a00"/><polygon points="2387.8,361.9 -802.9,1706.3 -819.9,1635.0" fill="#004e00"/><polygon points="2387.8,361.9 -811.5,1669.9 -827.9,1601.5" fill="#005200"/><polygon points="2387.8,361.9 -819.9,1635.0 -835.5,1569.3" fill="#005600"/><polygon points="2387.8,361.9 -827.9,1601.5 -842.9,1538.5" fill="#005a00"/><polygon points="2387.8,361.9 -835.5,1569.3 -850.0,1508.8" fill="#005e00"/><polygon points="2387.8,361.9 -842.9,1538.5 -856.8,1480.2" fill="#006200"/><polygon points="2387.8,361.9 -850.0,1508.8 -863.3,1452.8" fill="#006600"/><polygon points="2387.8,361.9 -856.8,1480.2 -869.6,1426.3" fill="#006a00"/><polygon points="2387.8,361.9 -863.3,1452.8 -875.7,1400.7" fill="#006e00"/><polygon points="2387.8,361.9 -869.6,1426.3 -881.6,1376.1" fill="#007200"/><polygon points="2387.8,361.9 -875.7,1400.7 -887.3,1352.3" fill="#007600"/><polygon points="2387.8,361.9 -881.6,1376.1 -892.8,1329.3" fill="#007a00"/><polygon points="2387.8,361.9 -887.3,1352.3 -898.1,1307.1" fill="#007e00"/><polygon points="2387.8,361.9 -892.8,1329.3 -903.2,1285.6" fill="#008100"/><polygon points="2387.8,361.9 -898.1,1307.1 -908.1,1264.8" fill="#008500"/><polygon points="2387.8,361.9 -903.2,1285.6 -912.9,1244.7" fill="#008900"/><polygon points="2387.8,361.9 -908.1,1264.8 -917.6,1225.2" fill="#008d00"/><polygon points="2387.8,361.9 -912.9,1244.7 -922.1,1206.3" fill="#009100"/><polygon points="2387.8,361.9 -917.6,1225.2 -926.5,1188.0" fill="#009500"/><polygon points="2387.8,361.9 -922.1,1206.3 -930.7,1170.2" fill="#009900"/><polygon points="2387.8,361.9 -926.5,1188.0 -934.8,1153.0" fill="#009d00"/><polygon points="2387.8,361.9 -930.7,1170.2 -938.8,1136.2" fill="#00a100"/><polygon points="2387.8,361.9 -934.8,1153.0 -942.7,1119.9" fill="#00a500"/><polygon points="2387.8,361.9 -938.8,1136.2 -946.5,1104.1" fill="#00a900"/><polygon points="2387.8,361.9 -942.7,1119.9 -950.1,1088.8" fill="#00ad00"/><polygon points="2387.8,361.9 -946.5,1104.1 -953.7,1073.8" fill="#00b100"/><polygon points="2387.8,361.9 -950.1,1088.8 -957.2,1059.3" fill="#00b500"/><polygon points="2387.8,361.9 -953.7,1073.8 -960.5,1045.1" fill="#00b900"/><polygon points="2387.8,361.9 -957.2,1059.3 -963.8,1031.3" fill="#00bd00"/><polygon points="2387.8,361.9 -960.5,1045.1 -967.0,1017.9" fill="#00c100"/><polygon points="2387.8,361.9 -963.8,1031.3 -970.1,1004.8" fill="#00c500"/><polygon points="2387.8,361.9 -967.0,1017.9 -973.2,992.1" fill="#00c900"/><polygon points="2387.8,361.9 -970.1,1004.8 -976.1,979.7" fill="#00cd00"/><polygon points="2387.8,361.9 -973.2,992.1 -979.0,967.6" fill="#00d100"/><polygon points="2387.8,361.9 -976.1,979.7 -981.9,955.7" fill="#00d500"/><polygon points="2387.8,361.9 -979.0,967.6 -984.6,944.2" fill="#00d900"/><polygon points="2387.8,361.9 -981.9,955.7 -987.3,932.9" fill="#00dd00"/><polygon points="2387.8,361.9 -984.6,944.2 -989.9,921.9" fill="#00e100"/><polygon points="2387.8,361.9 -987.3,932.9 -992.5,911.2" fill="#00e500"/><polygon points="2387.8,361.9 -989.9,921.9 -995.0,900.7" fill="#00e900"/><polygon points="2387.8,361.9 -992.5,911.2 -997.4,890.5" fill="#00ed00"/><polygon points="2387.8,361.9 -995.0,900.7 -999.8,880.4" fill="#00f100"/><polygon points="2387.8,361.9 -997.4,890.5 -1002.1,870.6" fill="#00f500"/><polygon points="2387.8,361.9 -999.8,880.4 -1012.8,826.1" fill="#00f900"/><polygon points="2387.8,361.9 -1002.1,870.6 -1012.8,826.1" fill="#00fd00"/>
</g>
</g>
<g style="mix-blend-mode:screen">
<polygon points="1937.9,427.3 1014.4,560.2 1667.8,3301.4 3470.9,1714.4" fill="#0000ff"/>
<g clip-path="url(#ccone0)">
<polygon points="1788.2,301.6 5385.9,663.5 5284.9,752.2" fill="#000002"/><polygon points="1788.2,301.6 5334.5,708.6 5237.1,794.3" fill="#000006"/><polygon points="1788.2,301.6 5284.9,752.2 5190.8,835.0" fill="#00000a"/><polygon points="1788.2,301.6 5237.1,794.3 5146.1,874.3" fill="#00000e"/><polygon points="1788.2,301.6 5190.8,835.0 5102.8,912.4" fill="#000012"/><polygon points="1788.2,301.6 5146.1,874.3 5060.9,949.2" fill="#000016"/><polygon points="1788.2,301.6 5102.8,912.4 5020.3,984.9" fill="#00001a"/><polygon points="1788.2,301.6 5060.9,949.2 4981.0,1019.5" fill="#00001e"/><polygon points="1788.2,301.6 5020.3,984.9 4942.9,1053.0" fill="#000022"/><polygon points="1788.2,301.6 4981.0,1019.5 4905.9,1085.5" fill="#000026"/><polygon points="1788.2,301.6 4942.9,1053.0 4870.1,1117.0" fill="#00002a"/><polygon points="1788.2,301.6 4905.9,1085.5 4835.2,1147.7" fill="#00002e"/><polygon points="1788.2,301.6 4870.1,1117.0 4801.4,1177.4" fill="#000032"/><polygon points="1788.2,301.6 4835.2,1147.7 4768.5,1206.3" fill="#000036"/><polygon points="1788.2,301.6 4801.4,1177.4 4736.6,1234.4" fill="#00003a"/><polygon points="1788.2,301.6 4768.5,1206.3 4705.5,1261.7" fill="#00003e"/><polygon points="1788.2,301.6 4736.6,1234.4 4675.3,1288.3" fill="#000042"/><polygon points="1788.2,301.6 4705.5,1261.7 4645.9,1314.1" fill="#000046"/><polygon points="1788.2,301.6 4675.3,1288.3 4617.2,1339.3" fill="#00004a"/><polygon points="1788.2,301.6 4645.9,1314.1 4589.4,1363.8" fill="#00004e"/><polygon points="1788.2,301.6 4617.2,1339.3 4562.2,1387.7" fill="#000052"/><polygon points="1788.2,301.6 4589.4,1363.8 4535.7,1411.0" fill="#000056"/><polygon points="1788.2,301.6 4562.2,1387.7 4509.9,1433.7" fill="#00005a"/><polygon points="1788.2,301.6 4535.7,1411.0 4484.7,1455.8" fill="#00005e"/><polygon points="1788.2,301.6 4509.9,1433.7 4460.2,1477.4" fill="#000062"/><polygon points="1788.2,301.6 4484.7,1455.8 4436.2,1498.5" fill="#000066"/><polygon points="1788.2,301.6 4460.2,1477.4 4412.9,1519.0" fill="#00006a"/><polygon points="1788.2,301.6 4436.2,1498.5 4390.0,1539.1" fill="#00006e"/><polygon points="1788.2,301.6 4412.9,1519.0 4367.7,1558.7" fill="#000072"/><polygon points="1788.2,301.6 4390.0,1539.1 4346.0,1577.9" fill="#000076"/><polygon points="1788.2,301.6 4367.7,1558.7 4324.7,1596.6" fill="#00007a"/><polygon points="1788.2,301.6 4346.0,1577.9 4303.9,1614.9" fill="#00007e"/><polygon points="1788.2,301.6 4324.7,1596.6 4283.5,1632.7" fill="#000081"/><polygon points="1788.2,301.6 4303.9,1614.9 4263.6,1650.2" fill="#000085"/><polygon points="1788.2,301.6 4283.5,1632.7 4244.2,1667.3" fill="#000089"/><polygon points="1788.2,301.6 4263.6,1650.2 4225.2,1684.1" fill="#00008d"/><polygon points="1788.2,301.6 4244.2,1667.3 4206.5,1700.4" fill="#000091"/><polygon points="1788.2,301.6 4225.2,1684.1 4188.3,1716.5" fill="#000095"/><polygon points="1788.2,301.6 4206.5,1700.4 4170.5,1732.2" fill="#000099"/><polygon points="1788.2,301.6 4188.3,1716.5 4153.0,1747.5" fill="#00009d"/><polygon points="1788.2,301.6 4170.5,1732.2 4135.9,1762.6" fill="#0000a1"/><polygon points="1788.2,301.6 4153.0,1747.5 4119.1,1777.3" fill="#0000a5"/><polygon points="1788.2,301.6 4135.9,1762.6 4102.7,1791.8" fill="#0000a9"/><polygon points="1788.2,301.6 4119.1,1777.3 4086.5,1806.0" fill="#0000ad"/><polygon points="1788.2,301.6 4102.7,1791.8 4070.7,1819.8" fill="#0000b1"/><polygon points="1788.2,301.6 4086.5,1806.0 4055.3,1833.5" fill="#0000b5"/><polygon points="1788.2,301.6 4070.7,1819.8 4040.1,1846.8" fill="#0000b9"/><polygon points="1788.2,301.6 4055.3,1833.5 4025.2,1859.9" fill="#0000bd"/><polygon points="1788.2,301.6 4040.1,1846.8 4010.6,1872.8" fill="#0000c1"/><polygon points="1788.2,301.6 4025.2,1859.9 3996.2,1885.4" fill="#0000c5"/><polygon points="1788.2,301.6 4010.6,1872.8 3982.2,1897.7" fill="#0000c9"/><polygon points="1788.2,301.6 3996.2,1885.4 3968.4,1909.9" fill="#0000cd"/><polygon points="1788.2,301.6 3982.2,1897.7 3954.8,1921.8" fill="#0000d1"/><polygon points="1788.2,301.6 3968.4,1909.9 3941.5,1933.5" fill="#0000d5"/><polygon points="1788.2,301.6 3954.8,1921.8 3928.4,1945.0" fill="#0000d9"/><polygon points="1788.2,301.6 3941.5,1933.5 3915.6,1956.3" fill="#0000dd"/><polygon points="1788.2,301.6 3928.4,1945.0 3902.9,1967.4" fill="#0000e1"/><polygon points="1788.2,301.6 3915.6,1956.3 3890.6,1978.3" fill="#0000e5"/><polygon points="1788.2,301.6 3902.9,1967.4 3878.4,1989.0" fill="#0000e9"/><polygon points="1788.2,301.6 3890.6,1978.3 3866.4,1999.5" fill="#0000ed"/><polygon points="1788.2,301.6 3878.4,1989.0 3854.6,2009.9" fill="#0000f1"/><polygon points="1788.2,301.6 3866.4,1999.5 3843.1,2020.1" fill="#0000f5"/><polygon points="1788.2,301.6 3854.6,2009.9 3789.7,2067.0" fill="#0000f9"/><polygon points="1788.2,301.6 3843.1,2020.1 3789.7,2067.0" fill="#0000fd"/>
</g>
<g clip-path="url(#ccone1)">
<polygon points="2387.8,361.9 -1209.8,0.1 -1200.8,37.8" fill="#000002"/><polygon points="2387.8,361.9 -1205.2,19.0 -1196.4,56.3" fill="#000006"/><polygon points="2387.8,361.9 -1200.8,37.8 -1192.0,74.5" fill="#00000a"/><polygon points="2387.8,361.9 -1196.4,56.3 -1187.7,92.5" fill="#00000e"/><polygon points="2387.8,361.9 -1192.0,74.5 -1183.5,110.3" fill="#000012"/><polygon points="2387.8,361.9 -1187.7,92.5 -1179.3,127.9" fill="#000016"/><polygon points="2387.8,361.9 -1183.5,110.3 -1175.1,145.2" fill="#00001a"/><polygon points="2387.8,361.9 -1179.3,127.9 -1171.1,162.4" fill="#00001e"/><polygon points="2387.8,361.9 -1175.1,145.2 -1167.0,179.3" fill="#000022"/><polygon points="2387.8,361.9 -1171.1,162.4 -1163.0,196.0" fill="#000026"/><polygon points="2387.8,361.9 -1167.0,179.3 -1159.1,212.5" fill="#00002a"/><polygon points="2387.8,361.9 -1163.0,196.0 -1155.2,228.8" fill="#00002e"/><polygon points="2387.8,361.9 -1159.1,212.5 -1151.4,244.9" fill="#000032"/><polygon points="2387.8,361.9 -1155.2,228.8 -1147.6,260.9" fill="#000036"/><polygon points="2387.8,361.9 -1151.4,244.9 -1143.8,276.6" fill="#00003a"/><polygon points="2387.8,361.9 -1147.6,260.9 -1140.1,292.1" fill="#00003e"/><polygon points="2387.8,361.9 -1143.8,276.6 -1136.4,307.5" fill="#000042"/><polygon points="2387.8,361.9 -1140.1,292.1 -1132.8,322.7" fill="#000046"/><polygon points="2387.8,361.9 -1136.4,307.5 -1129.2,337.7" fill="#00004a"/><polygon points="2387.8,361.9 -1132.8,322.7 -1125.7,352.6" fill="#00004e"/><polygon points="2387.8,361.9 -1129.2,337.7 -1122.2,367.2" fill="#000052"/><polygon points="2387.8,361.9 -1125.7,352.6 -1118.7,381.7" fill="#000056"/><polygon points="2387.8,361.9 -1122.2,367.2 -1115.3,396.1" fill="#00005a"/><polygon points="2387.8,361.9 -1118.7,381.7 -1111.9,410.2" fill="#00005e"/><polygon points="2387.8,361.9 -1115.3,396.1 -1108.6,424.3" fill="#000062"/><polygon points="2387.8,361.9 -1111.9,410.2 -1105.3,438.1" fill="#000066"/><polygon points="2387.8,361.9 -1108.6,424.3 -1102.0,451.8" fill="#00006a"/><polygon points="2387.8,361.9 -1105.3,438.1 -1098.8,465.4" fill="#00006e"/><polygon points="2387.8,361.9 -1102.0,451.8 -1095.6,478.8" fill="#000072"/><polygon points="2387.8,361.9 -1098.8,465.4 -1092.4,492.1" fill="#000076"/><polygon points="2387.8,361.9 -1095.6,478.8 -1089.3,505.2" fill="#00007a"/><polygon points="2387.8,361.9 -1092.4,492.1 -1086.2,518.2" fill="#00007e"/><polygon points="2387.8,361.9 -1089.3,505.2 -1083.1,531.0" fill="#000081"/><polygon points="2387.8,361.9 -1086.2,518.2 -1080.1,543.7" fill="#000085"/><polygon points="2387.8,361.9 -1083.1,531.0 -1077.1,556.3" fill="#000089"/><polygon points="2387.8,361.9 -1080.1,543.7 -1074.2,568.7" fill="#00008d"/><polygon points="2387.8,361.9 -1077.1,556.3 -1071.2,581.0" fill="#000091"/><polygon points="2387.8,361.9 -1074.2,568.7 -1068.3,593.2" fill="#000095"/><polygon points="2387.8,361.9 -1071.2,581.0 -1065.4,605.2" fill="#000099"/><polygon points="2387.8,361.9 -1068.3,593.2 -1062.6,617.2" fill="#00009d"/><polygon points="2387.8,361.9 -1065.4,605.2 -1059.8,629.0" fill="#0000a1"/><polygon points="2387.8,361.9 -1062.6,617.2 -1057.0,640.6" fill="#0000a5"/><polygon points="2387.8,361.9 -1059.8,629.0 -1054.2,652.2" fill="#0000a9"/><polygon points="2387.8,361.9 -1057.0,640.6 -1051.5,663.7" fill="#0000ad"/><polygon points="2387.8,361.9 -1054.2,652.2 -1048.8,675.0" fill="#0000b1"/><polygon points="2387.8,361.9 -1051.5,663.7 -1046.1,686.2" fill="#0000b5"/><polygon points="2387.8,361.9 -1048.8,675.0 -1043.5,697.3" fill="#0000b9"/><polygon points="2387.8,361.9 -1046.1,686.2 -1040.9,708.3" fill="#0000bd"/><polygon points="2387.8,361.9 -1043.5,697.3 -1038.3,719.2" fill="#0000c1"/><polygon points="2387.8,361.9 -1040.9,708.3 -1035.7,730.0" fill="#0000c5"/><polygon points="2387.8,361.9 -1038.3,719.2 -1033.1,740.6" fill="#0000c9"/><polygon points="2387.8,361.9 -1035.7,730.0 -1030.6,751.2" fill="#0000cd"/><polygon points="2387.8,361.9 -1033.1,740.6 -1028.1,761.7" fill="#0000d1"/><polygon points="2387.8,361.9 -1030.6,751.2 -1025.7,772.1" fill="#0000d5"/><polygon points="2387.8,361.9 -1028.1,761.7 -1023.2,782.3" fill="#0000d9"/><polygon points="2387.8,361.9 -1025.7,772.1 -1020.8,792.5" fill="#0000dd"/><polygon points="2387.8,361.9 -1023.2,782.3 -1018.4,802.6" fill="#0000e1"/><polygon points="2387.8,361.9 -1020.8,792.5 -1016.0,812.5" fill="#0000e5"/><polygon points="2387.8,361.9 -1018.4,802.6 -1013.6,822.4" fill="#0000e9"/><polygon points="2387.8,361.9 -1016.0,812.5 -1011.3,832.2" fill="#0000ed"/><polygon points="2387.8,361.9 -1013.6,822.4 -1009.0,841.9" fill="#0000f1"/><polygon points="2387.8,361.9 -1011.3,832.2 -1006.7,851.5" fill="#0000f5"/><polygon points="2387.8,361.9 -1009.0,841.9 -995.9,896.8" fill="#0000f9"/><polygon points="2387.8,361.9 -1006.7,851.5 -995.9,896.8" fill="#0000fd"/>
</g>
</g>
</g>
<path d="M1635.0,269.0 H2550.0 V975.0 H1635.0 Z M2387.8,361.9 L1788.2,301.6 L1904.1,787.3 Z" fill="#000" fill-opacity="0.40" fill-rule="evenodd" filter="url(#soft)"/>
</g></g>
<rect x="1640.0" y="274.0" width="905.0" height="696.0" fill="none" stroke="#a0a0a0" stroke-width="1.8"/>
<line x1="1639.60" y1="970.00" x2="1639.60" y2="979.00" stroke="#d8d8d8" stroke-width="2"/>
<line x1="1631.00" y1="970.00" x2="1640.00" y2="970.00" stroke="#d8d8d8" stroke-width="2"/>
<text x="1639.6" y="1000.5" font-size="21" fill="#d6d6d6" text-anchor="middle" textLength="11.3" lengthAdjust="spacingAndGlyphs">0</text>
<text x="1630.5" y="979.0" font-size="21" fill="#d6d6d6" text-anchor="end" textLength="11.3" lengthAdjust="spacingAndGlyphs">0</text>
<line x1="1714.97" y1="970.00" x2="1714.97" y2="979.00" stroke="#d8d8d8" stroke-width="2"/>
<line x1="1631.00" y1="912.15" x2="1640.00" y2="912.15" stroke="#d8d8d8" stroke-width="2"/>
<text x="1715.0" y="1000.5" font-size="21" fill="#d6d6d6" text-anchor="middle" textLength="39.8" lengthAdjust="spacingAndGlyphs">0.05</text>
<text x="1630.5" y="921.1" font-size="21" fill="#d6d6d6" text-anchor="end" textLength="39.8" lengthAdjust="spacingAndGlyphs">0.05</text>
<line x1="1790.35" y1="970.00" x2="1790.35" y2="979.00" stroke="#d8d8d8" stroke-width="2"/>
<line x1="1631.00" y1="854.30" x2="1640.00" y2="854.30" stroke="#d8d8d8" stroke-width="2"/>
<text x="1790.3" y="1000.5" font-size="21" fill="#d6d6d6" text-anchor="middle" textLength="27.8" lengthAdjust="spacingAndGlyphs">0.1</text>
<text x="1630.5" y="863.3" font-size="21" fill="#d6d6d6" text-anchor="end" textLength="27.8" lengthAdjust="spacingAndGlyphs">0.1</text>
<line x1="1865.72" y1="970.00" x2="1865.72" y2="979.00" stroke="#d8d8d8" stroke-width="2"/>
<line x1="1631.00" y1="796.45" x2="1640.00" y2="796.45" stroke="#d8d8d8" stroke-width="2"/>
<text x="1865.7" y="1000.5" font-size="21" fill="#d6d6d6" text-anchor="middle" textLength="39.8" lengthAdjust="spacingAndGlyphs">0.15</text>
<text x="1630.5" y="805.4" font-size="21" fill="#d6d6d6" text-anchor="end" textLength="39.8" lengthAdjust="spacingAndGlyphs">0.15</text>
<line x1="1941.10" y1="970.00" x2="1941.10" y2="979.00" stroke="#d8d8d8" stroke-width="2"/>
<line x1="1631.00" y1="738.60" x2="1640.00" y2="738.60" stroke="#d8d8d8" stroke-width="2"/>
<text x="1941.1" y="1000.5" font-size="21" fill="#d6d6d6" text-anchor="middle" textLength="27.8" lengthAdjust="spacingAndGlyphs">0.2</text>
<text x="1630.5" y="747.6" font-size="21" fill="#d6d6d6" text-anchor="end" textLength="27.8" lengthAdjust="spacingAndGlyphs">0.2</text>
<line x1="2016.47" y1="970.00" x2="2016.47" y2="979.00" stroke="#d8d8d8" stroke-width="2"/>
<line x1="1631.00" y1="680.75" x2="1640.00" y2="680.75" stroke="#d8d8d8" stroke-width="2"/>
<text x="2016.5" y="1000.5" font-size="21" fill="#d6d6d6" text-anchor="middle" textLength="39.8" lengthAdjust="spacingAndGlyphs">0.25</text>
<text x="1630.5" y="689.8" font-size="21" fill="#d6d6d6" text-anchor="end" textLength="39.8" lengthAdjust="spacingAndGlyphs">0.25</text>
<line x1="2091.85" y1="970.00" x2="2091.85" y2="979.00" stroke="#d8d8d8" stroke-width="2"/>
<line x1="1631.00" y1="622.90" x2="1640.00" y2="622.90" stroke="#d8d8d8" stroke-width="2"/>
<text x="2091.8" y="1000.5" font-size="21" fill="#d6d6d6" text-anchor="middle" textLength="27.8" lengthAdjust="spacingAndGlyphs">0.3</text>
<text x="1630.5" y="631.9" font-size="21" fill="#d6d6d6" text-anchor="end" textLength="27.8" lengthAdjust="spacingAndGlyphs">0.3</text>
<line x1="2167.22" y1="970.00" x2="2167.22" y2="979.00" stroke="#d8d8d8" stroke-width="2"/>
<line x1="1631.00" y1="565.05" x2="1640.00" y2="565.05" stroke="#d8d8d8" stroke-width="2"/>
<text x="2167.2" y="1000.5" font-size="21" fill="#d6d6d6" text-anchor="middle" textLength="39.8" lengthAdjust="spacingAndGlyphs">0.35</text>
<text x="1630.5" y="574.0" font-size="21" fill="#d6d6d6" text-anchor="end" textLength="39.8" lengthAdjust="spacingAndGlyphs">0.35</text>
<line x1="2242.60" y1="970.00" x2="2242.60" y2="979.00" stroke="#d8d8d8" stroke-width="2"/>
<line x1="1631.00" y1="507.20" x2="1640.00" y2="507.20" stroke="#d8d8d8" stroke-width="2"/>
<text x="2242.6" y="1000.5" font-size="21" fill="#d6d6d6" text-anchor="middle" textLength="27.8" lengthAdjust="spacingAndGlyphs">0.4</text>
<text x="1630.5" y="516.2" font-size="21" fill="#d6d6d6" text-anchor="end" textLength="27.8" lengthAdjust="spacingAndGlyphs">0.4</text>
<line x1="2317.97" y1="970.00" x2="2317.97" y2="979.00" stroke="#d8d8d8" stroke-width="2"/>
<line x1="1631.00" y1="449.35" x2="1640.00" y2="449.35" stroke="#d8d8d8" stroke-width="2"/>
<text x="2318.0" y="1000.5" font-size="21" fill="#d6d6d6" text-anchor="middle" textLength="39.8" lengthAdjust="spacingAndGlyphs">0.45</text>
<text x="1630.5" y="458.4" font-size="21" fill="#d6d6d6" text-anchor="end" textLength="39.8" lengthAdjust="spacingAndGlyphs">0.45</text>
<line x1="2393.35" y1="970.00" x2="2393.35" y2="979.00" stroke="#d8d8d8" stroke-width="2"/>
<line x1="1631.00" y1="391.50" x2="1640.00" y2="391.50" stroke="#d8d8d8" stroke-width="2"/>
<text x="2393.3" y="1000.5" font-size="21" fill="#d6d6d6" text-anchor="middle" textLength="27.8" lengthAdjust="spacingAndGlyphs">0.5</text>
<text x="1630.5" y="400.5" font-size="21" fill="#d6d6d6" text-anchor="end" textLength="27.8" lengthAdjust="spacingAndGlyphs">0.5</text>
<line x1="2468.72" y1="970.00" x2="2468.72" y2="979.00" stroke="#d8d8d8" stroke-width="2"/>
<line x1="1631.00" y1="333.65" x2="1640.00" y2="333.65" stroke="#d8d8d8" stroke-width="2"/>
<text x="2468.7" y="1000.5" font-size="21" fill="#d6d6d6" text-anchor="middle" textLength="39.8" lengthAdjust="spacingAndGlyphs">0.55</text>
<text x="1630.5" y="342.6" font-size="21" fill="#d6d6d6" text-anchor="end" textLength="39.8" lengthAdjust="spacingAndGlyphs">0.55</text>
<rect x="2006.0" y="405.2" width="19" height="19" fill="none" stroke="#fff" stroke-width="2.2"/>
<rect x="2089.1" y="393.0" width="19" height="19" fill="none" stroke="#fff" stroke-width="2.2"/>
<rect x="2185.0" y="377.9" width="19" height="19" fill="none" stroke="#fff" stroke-width="2.2"/>
<rect x="2278.3" y="364.5" width="19" height="19" fill="none" stroke="#fff" stroke-width="2.2"/>
<rect x="2378.1" y="348.9" width="19" height="19" fill="none" stroke="#fff" stroke-width="2.2"/>
<rect x="1883.1" y="377.8" width="19" height="19" fill="none" stroke="#fff" stroke-width="2.2"/>
<rect x="1848.6" y="349.0" width="19" height="19" fill="none" stroke="#fff" stroke-width="2.2"/>
<rect x="1819.8" y="324.1" width="19" height="19" fill="none" stroke="#fff" stroke-width="2.2"/>
<rect x="1797.9" y="305.0" width="19" height="19" fill="none" stroke="#fff" stroke-width="2.2"/>
<rect x="1779.0" y="289.6" width="19" height="19" fill="none" stroke="#fff" stroke-width="2.2"/>
<rect x="1923.6" y="459.1" width="19" height="19" fill="none" stroke="#fff" stroke-width="2.2"/>
<rect x="1920.2" y="513.0" width="19" height="19" fill="none" stroke="#fff" stroke-width="2.2"/>
<rect x="1914.2" y="577.9" width="19" height="19" fill="none" stroke="#fff" stroke-width="2.2"/>
<rect x="1904.1" y="665.0" width="19" height="19" fill="none" stroke="#fff" stroke-width="2.2"/>
<rect x="1895.1" y="776.4" width="19" height="19" fill="none" stroke="#fff" stroke-width="2.2"/>
<rect x="1904.0" y="419.4" width="19" height="19" fill="none" stroke="#fff" stroke-width="2.2"/>
<rect x="1881.1" y="424.1" width="19" height="19" fill="none" stroke="#fff" stroke-width="2.2"/>
<rect x="1858.0" y="426.1" width="19" height="19" fill="none" stroke="#fff" stroke-width="2.2"/>
<rect x="1835.1" y="430.0" width="19" height="19" fill="none" stroke="#fff" stroke-width="2.2"/>
<rect x="1811.9" y="433.6" width="19" height="19" fill="none" stroke="#fff" stroke-width="2.2"/>
<rect x="1954.0" y="437.7" width="19" height="19" fill="none" stroke="#fff" stroke-width="2.2"/>
<rect x="1984.8" y="464.8" width="19" height="19" fill="none" stroke="#fff" stroke-width="2.2"/>
<rect x="2023.6" y="496.9" width="19" height="19" fill="none" stroke="#fff" stroke-width="2.2"/>
<rect x="2066.1" y="534.1" width="19" height="19" fill="none" stroke="#fff" stroke-width="2.2"/>
<rect x="2120.4" y="577.9" width="19" height="19" fill="none" stroke="#fff" stroke-width="2.2"/>
<rect x="1931.2" y="387.6" width="19" height="19" fill="none" stroke="#fff" stroke-width="2.2"/>
<rect x="1933.3" y="364.2" width="19" height="19" fill="none" stroke="#fff" stroke-width="2.2"/>
<rect x="1935.3" y="342.9" width="19" height="19" fill="none" stroke="#fff" stroke-width="2.2"/>
<rect x="1937.3" y="323.0" width="19" height="19" fill="none" stroke="#fff" stroke-width="2.2"/>
<rect x="1939.2" y="304.8" width="19" height="19" fill="none" stroke="#fff" stroke-width="2.2"/>
<rect x="1927.3" y="416.5" width="18.8" height="18.8" fill="none" stroke="#000" stroke-width="2.6"/>
<circle cx="2041.1" cy="412.5" r="5.9" fill="#b68d8d" stroke="#000" stroke-width="1.6"/>
<circle cx="2143.1" cy="397.1" r="5.9" fill="#bd6a6a" stroke="#000" stroke-width="1.6"/>
<circle cx="2235.2" cy="385.4" r="5.9" fill="#c34646" stroke="#000" stroke-width="1.6"/>
<circle cx="2329.6" cy="374.0" r="5.9" fill="#ca2323" stroke="#000" stroke-width="1.6"/>
<circle cx="2414.1" cy="362.5" r="5.9" fill="#d00000" stroke="#000" stroke-width="1.6"/>
<circle cx="1894.7" cy="389.0" r="5.9" fill="#8db08d" stroke="#000" stroke-width="1.6"/>
<circle cx="1856.1" cy="360.3" r="5.9" fill="#6ab06a" stroke="#000" stroke-width="1.6"/>
<circle cx="1823.7" cy="337.2" r="5.9" fill="#46b046" stroke="#000" stroke-width="1.6"/>
<circle cx="1794.6" cy="314.5" r="5.9" fill="#23b023" stroke="#000" stroke-width="1.6"/>
<circle cx="1767.4" cy="295.0" r="5.9" fill="#00b000" stroke="#000" stroke-width="1.6"/>
<circle cx="1935.1" cy="474.0" r="5.9" fill="#8d8db0" stroke="#000" stroke-width="1.6"/>
<circle cx="1929.0" cy="531.9" r="5.9" fill="#6a6ab0" stroke="#000" stroke-width="1.6"/>
<circle cx="1921.7" cy="603.2" r="5.9" fill="#4646b0" stroke="#000" stroke-width="1.6"/>
<circle cx="1912.3" cy="699.2" r="5.9" fill="#2323b0" stroke="#000" stroke-width="1.6"/>
<circle cx="1896.6" cy="822.4" r="5.9" fill="#0000b0" stroke="#000" stroke-width="1.6"/>
<circle cx="1912.3" cy="427.9" r="5.9" fill="#8db3b3" stroke="#000" stroke-width="1.6"/>
<circle cx="1885.1" cy="431.6" r="5.9" fill="#6ab6b6" stroke="#000" stroke-width="1.6"/>
<circle cx="1858.1" cy="435.4" r="5.9" fill="#46baba" stroke="#000" stroke-width="1.6"/>
<circle cx="1831.0" cy="439.5" r="5.9" fill="#23bdbd" stroke="#000" stroke-width="1.6"/>
<circle cx="1801.9" cy="443.5" r="5.9" fill="#00c0c0" stroke="#000" stroke-width="1.6"/>
<circle cx="1978.9" cy="450.9" r="5.9" fill="#b38db3" stroke="#000" stroke-width="1.6"/>
<circle cx="2017.4" cy="480.0" r="5.9" fill="#b66ab6" stroke="#000" stroke-width="1.6"/>
<circle cx="2055.9" cy="508.5" r="5.9" fill="#ba46ba" stroke="#000" stroke-width="1.6"/>
<circle cx="2106.1" cy="545.6" r="5.9" fill="#bd23bd" stroke="#000" stroke-width="1.6"/>
<circle cx="2162.0" cy="587.4" r="5.9" fill="#c000c0" stroke="#000" stroke-width="1.6"/>
<circle cx="1946.6" cy="397.1" r="5.9" fill="#b5b58d" stroke="#000" stroke-width="1.6"/>
<circle cx="1948.7" cy="371.9" r="5.9" fill="#baba6a" stroke="#000" stroke-width="1.6"/>
<circle cx="1950.7" cy="351.2" r="5.9" fill="#bebe46" stroke="#000" stroke-width="1.6"/>
<circle cx="1952.3" cy="333.4" r="5.9" fill="#c3c323" stroke="#000" stroke-width="1.6"/>
<circle cx="1956.2" cy="314.5" r="5.9" fill="#c8c800" stroke="#000" stroke-width="1.6"/>
<circle cx="1940.5" cy="425.9" r="5.4" fill="#fff" stroke="#000" stroke-width="1.2"/>
<circle cx="1956.2" cy="420.2" r="6.6" fill="#000"/>
<rect x="2232.00" y="751.00" width="308.50" height="212.00" fill="#2c2c2c"/>
<defs><clipPath id="insclip"><rect x="2237.0" y="756.0" width="298.5" height="202.0"/></clipPath>
<clipPath id="ilocclip"><path d="M816.5,2990.7 L816.4,2990.7 L816.3,2990.7 L816.2,2990.7 L816.1,2990.7 L815.9,2990.7 L815.7,2990.8 L815.5,2990.9 L815.2,2991.0 L814.9,2991.1 L814.7,2991.1 L814.5,2991.1 L814.3,2991.1 L814.0,2991.1 L813.8,2991.1 L813.5,2991.1 L813.2,2991.2 L812.8,2991.3 L812.5,2991.4 L812.1,2991.5 L811.7,2991.5 L811.4,2991.5 L811.0,2991.6 L810.7,2991.5 L810.3,2991.5 L809.9,2991.5 L809.5,2991.5 L809.1,2991.5 L808.6,2991.5 L808.1,2991.5 L807.6,2991.5 L807.0,2991.5 L806.5,2991.6 L805.9,2991.6 L805.3,2991.6 L804.6,2991.5 L803.9,2991.4 L803.1,2991.2 L802.3,2991.0 L801.4,2990.7 L800.4,2990.3 L799.3,2989.9 L798.1,2989.4 L796.7,2988.8 L795.3,2988.2 L793.9,2987.5 L792.4,2986.8 L790.8,2986.0 L789.2,2985.1 L787.5,2984.1 L785.5,2983.1 L783.4,2981.9 L781.2,2980.6 L778.8,2979.3 L776.3,2977.8 L773.6,2976.2 L770.9,2974.6 L768.1,2972.8 L765.2,2971.0 L762.1,2969.0 L758.8,2967.0 L755.3,2964.9 L751.6,2962.7 L747.7,2960.4 L743.6,2958.0 L739.1,2955.3 L734.3,2952.5 L729.3,2949.6 L723.9,2946.4 L718.2,2943.1 L712.4,2939.7 L706.2,2936.1 L699.9,2932.3 L693.3,2928.4 L686.3,2924.2 L679.0,2919.6 L671.4,2914.7 L663.4,2909.5 L655.1,2904.0 L646.4,2898.0 L637.4,2891.4 L628.1,2884.5 L618.6,2877.4 L608.7,2869.7 L598.2,2860.8 L586.8,2850.4 L574.6,2838.7 L561.8,2826.0 L548.3,2811.9 L534.0,2796.2 L519.0,2778.5 L503.3,2759.1 L486.9,2738.3 L469.7,2715.5 L451.7,2690.3 L432.7,2661.9 L412.8,2630.7 L392.0,2597.2 L370.3,2560.8 L347.6,2521.0 L323.8,2477.4 L298.6,2430.1 L272.1,2379.5 L244.7,2325.2 L216.9,2266.9 L189.4,2204.0 L161.8,2136.5 L133.8,2064.5 L105.8,1988.4 L78.0,1908.4 L50.7,1824.9 L23.5,1736.8 L-3.9,1644.0 L-30.7,1547.9 L-56.2,1450.0 L-79.6,1351.8 L-101.4,1252.2 L-122.0,1150.2 L-140.8,1047.4 L-157.2,945.6 L-170.6,846.5 L-181.3,749.1 L-189.7,652.5 L-195.2,557.8 L-197.6,466.1 L-196.2,378.5 L-191.2,294.3 L-182.8,212.6 L-171.0,134.6 L-155.7,61.7 L-136.7,-5.0 L-113.7,-65.9 L-86.6,-121.8 L-56.2,-172.1 L-23.1,-216.2 L12.0,-253.4 L49.8,-283.1 L90.6,-305.7 L133.5,-322.2 L177.8,-333.7 L222.7,-341.1 L268.4,-343.3 L315.5,-339.8 L363.6,-332.1 L411.9,-321.8 L460.1,-310.5 L508.3,-297.7 L556.9,-282.3 L605.5,-265.2 L653.7,-247.1 L701.1,-228.9 L747.5,-210.6 L793.4,-191.6 L838.7,-171.9 L883.7,-151.8 L928.3,-131.2 L972.6,-110.2 L1016.5,-88.7 L1060.0,-66.7 L1103.4,-44.3 L1146.7,-21.5 L1190.0,1.8 L1233.2,25.6 L1276.3,49.8 L1319.2,74.3 L1362.1,99.1 L1404.9,124.3 L1447.5,149.7 L1490.1,175.5 L1532.6,201.6 L1575.1,227.8 L1617.6,254.2 L1660.1,280.9 L1702.5,307.8 L1745.0,334.8 L1787.5,362.0 L1830.1,389.4 L1872.7,417.0 L1915.4,444.7 L1958.0,472.5 L2000.5,500.3 L2043.0,528.3 L2085.4,556.3 L2127.8,584.4 L2170.1,612.5 L2212.4,640.6 L2254.6,668.7 L2296.9,696.8 L2339.1,724.9 L2381.1,753.0 L2423.0,780.9 L2464.6,808.8 L2506.2,836.7 L2547.5,864.5 L2588.6,892.1 L2629.4,919.6 L2670.1,947.0 L2710.5,974.2 L2750.6,1001.2 L2790.5,1028.1 L2830.0,1054.7 L2869.1,1081.1 L2908.0,1107.3 L2946.5,1133.2 L2984.6,1158.8 L3022.1,1184.1 L3059.3,1209.1 L3096.1,1233.8 L3132.4,1258.1 L3168.1,1282.0 L3203.0,1305.5 L3237.4,1328.7 L3271.1,1351.5 L3304.2,1373.9 L3336.5,1395.7 L3367.8,1416.9 L3398.2,1437.3 L3427.6,1457.1 L3456.2,1476.3 L3484.0,1495.1 L3511.2,1513.4 L3537.9,1531.3 L3564.0,1548.9 L3589.3,1565.9 L3613.8,1582.4 L3637.4,1598.2 L3660.0,1613.3 L3681.8,1627.8 L3702.7,1641.8 L3722.8,1655.2 L3742.1,1668.1 L3760.6,1680.6 L3778.4,1692.6 L3795.3,1704.1 L3811.6,1715.1 L3827.2,1725.6 L3842.1,1735.7 L3856.2,1745.3 L3869.7,1754.4 L3882.6,1763.1 L3895.0,1771.5 L3906.9,1779.4 L3918.2,1786.9 L3928.9,1794.1 L3939.2,1801.0 L3949.2,1807.6 L3958.6,1814.0 L3967.6,1820.1 L3976.2,1825.9 L3984.5,1831.5 L3992.6,1837.0 L4000.4,1842.3 L4007.9,1847.3 L4015.2,1852.2 L4022.2,1857.0 L4028.9,1861.5 L4035.4,1865.9 L4041.5,1870.1 L4047.5,1874.1 L4053.2,1877.9 L4058.6,1881.6 L4063.9,1885.1 L4068.9,1888.4 L4073.6,1891.5 L4078.2,1894.4 L4082.4,1897.3 L4086.5,1900.0 L4090.2,1902.5 L4093.7,1904.9 L4097.1,1907.2 L4100.3,1909.3 L4103.4,1911.4 L4106.2,1913.4 L4109.0,1915.2 L4111.5,1916.9 L4114.0,1918.6 L4116.3,1920.1 L4118.4,1921.6 L4120.5,1923.0 L4122.4,1924.2 L4124.1,1925.4 L4125.6,1926.5 L4127.0,1927.4 L4128.3,1928.2 L4129.5,1929.0 L4130.6,1929.8 L4131.8,1930.6 L4132.9,1931.4 L4134.0,1932.1 L4135.0,1932.8 L4136.0,1933.5 L4136.9,1934.1 L4137.7,1934.6 L4138.5,1935.2 L4139.3,1935.7 L4140.2,1936.3 L4141.0,1936.8 L4141.8,1937.4 L4142.7,1938.0 L4143.5,1938.5 L4144.3,1939.1 L4145.1,1939.6 L4145.8,1940.1 L4146.6,1940.6 L4147.3,1941.1 L4147.9,1941.5 L4148.5,1941.9 L4149.0,1942.2 L4149.5,1942.6 L4149.9,1942.8 L4150.3,1943.1 L4150.6,1943.3 L4150.9,1943.5 L4151.1,1943.7 L4151.3,1943.8 L4151.5,1943.9 L4151.6,1944.0 L4151.8,1944.1 L4151.9,1944.2 L4152.0,1944.3 L4152.1,1944.3 Z"/></clipPath></defs>
<rect x="2237.00" y="756.00" width="298.50" height="202.00" fill="#232323"/>
<g clip-path="url(#insclip)"><g clip-path="url(#ilocclip)">
<g style="isolation:isolate">
<rect x="2232.00" y="751.00" width="308.50" height="212.00" fill="#000"/>
<clipPath id="icone0"><polygon points="1635.9,1688.2 2735.7,7406.5 19124.6,1977.7 7571.2,-4989.5"/></clipPath>
<clipPath id="icone1"><polygon points="1641.8,1691.7 7624.4,-4941.8 -629.4,-9921.5 -3742.3,1620.7"/></clipPath>
<clipPath id="icone2"><polygon points="1643.5,1685.6 -3741.6,1577.6 -6103.4,10339.3 2781.5,7397.5"/></clipPath>
<g style="mix-blend-mode:screen">
<polygon points="1635.9,1688.2 2735.7,7406.5 19124.6,1977.7 7571.2,-4989.5" fill="#ff0000"/>
<g clip-path="url(#icone1)">
<polygon points="673.1,2769.6 4778.6,-12426.0 5289.1,-12118.5" fill="#030000"/><polygon points="673.1,2769.6 5038.3,-12269.5 5531.4,-11972.5" fill="#0a0000"/><polygon points="673.1,2769.6 5289.1,-12118.5 5765.6,-11831.4" fill="#100000"/><polygon points="673.1,2769.6 5531.4,-11972.5 5992.1,-11695.0" fill="#160000"/><polygon points="673.1,2769.6 5765.6,-11831.4 6211.4,-11562.9" fill="#1d0000"/><polygon points="673.1,2769.6 5992.1,-11695.0 6423.7,-11435.0" fill="#230000"/><polygon points="673.1,2769.6 6211.4,-11562.9 6629.3,-11311.2" fill="#290000"/><polygon points="673.1,2769.6 6423.7,-11435.0 6828.6,-11191.1" fill="#300000"/><polygon points="673.1,2769.6 6629.3,-11311.2 7021.9,-11074.7" fill="#360000"/><polygon points="673.1,2769.6 6828.6,-11191.1 7209.5,-10961.7" fill="#3d0000"/><polygon points="673.1,2769.6 7021.9,-11074.7 7391.5,-10852.1" fill="#430000"/><polygon points="673.1,2769.6 7209.5,-10961.7 7568.2,-10745.6" fill="#490000"/><polygon points="673.1,2769.6 7391.5,-10852.1 7739.9,-10642.2" fill="#500000"/><polygon points="673.1,2769.6 7568.2,-10745.6 7906.8,-10541.7" fill="#560000"/><polygon points="673.1,2769.6 7739.9,-10642.2 8069.0,-10443.9" fill="#5c0000"/><polygon points="673.1,2769.6 7906.8,-10541.7 8226.8,-10348.9" fill="#630000"/><polygon points="673.1,2769.6 8069.0,-10443.9 8380.3,-10256.4" fill="#690000"/><polygon points="673.1,2769.6 8226.8,-10348.9 8529.7,-10166.4" fill="#700000"/><polygon points="673.1,2769.6 8380.3,-10256.4 8675.2,-10078.8" fill="#760000"/><polygon points="673.1,2769.6 8529.7,-10166.4 8817.0,-9993.4" fill="#7c0000"/><polygon points="673.1,2769.6 8675.2,-10078.8 8955.1,-9910.2" fill="#830000"/><polygon points="673.1,2769.6 8817.0,-9993.4 9089.7,-9829.1" fill="#890000"/><polygon points="673.1,2769.6 8955.1,-9910.2 9220.9,-9750.1" fill="#8f0000"/><polygon points="673.1,2769.6 9089.7,-9829.1 9348.9,-9673.0" fill="#960000"/><polygon points="673.1,2769.6 9220.9,-9750.1 9473.8,-9597.8" fill="#9c0000"/><polygon points="673.1,2769.6 9348.9,-9673.0 9595.6,-9524.3" fill="#a30000"/><polygon points="673.1,2769.6 9473.8,-9597.8 9714.6,-9452.7" fill="#a90000"/><polygon points="673.1,2769.6 9595.6,-9524.3 9830.8,-9382.7" fill="#af0000"/><polygon points="673.1,2769.6 9714.6,-9452.7 9944.2,-9314.3" fill="#b60000"/><polygon points="673.1,2769.6 9830.8,-9382.7 10055.1,-9247.6" fill="#bc0000"/><polygon points="673.1,2769.6 9944.2,-9314.3 10163.5,-9182.3" fill="#c20000"/><polygon points="673.1,2769.6 10055.1,-9247.6 10269.4,-9118.5" fill="#c90000"/><polygon points="673.1,2769.6 10163.5,-9182.3 10372.9,-9056.1" fill="#cf0000"/><polygon points="673.1,2769.6 10269.4,-9118.5 10474.2,-8995.1" fill="#d60000"/><polygon points="673.1,2769.6 10372.9,-9056.1 10573.3,-8935.4" fill="#dc0000"/><polygon points="673.1,2769.6 10474.2,-8995.1 10670.3,-8877.0" fill="#e20000"/><polygon points="673.1,2769.6 10573.3,-8935.4 10765.1,-8819.9" fill="#e90000"/><polygon points="673.1,2769.6 10670.3,-8877.0 10858.0,-8763.9" fill="#ef0000"/><polygon points="673.1,2769.6 10765.1,-8819.9 11159.8,-8582.2" fill="#f50000"/><polygon points="673.1,2769.6 10858.0,-8763.9 11159.8,-8582.2" fill="#fc0000"/>
</g>
<g clip-path="url(#icone2)">
<polygon points="1357.3,237.0 -2748.2,15432.6 -2249.4,15267.3" fill="#030000"/><polygon points="1357.3,237.0 -2495.4,15348.9 -2009.7,15187.9" fill="#0a0000"/><polygon points="1357.3,237.0 -2249.4,15267.3 -1776.2,15110.5" fill="#100000"/><polygon points="1357.3,237.0 -2009.7,15187.9 -1548.7,15035.1" fill="#160000"/><polygon points="1357.3,237.0 -1776.2,15110.5 -1326.8,14961.5" fill="#1d0000"/><polygon points="1357.3,237.0 -1548.7,15035.1 -1110.4,14889.8" fill="#230000"/><polygon points="1357.3,237.0 -1326.8,14961.5 -899.3,14819.8" fill="#290000"/><polygon points="1357.3,237.0 -1110.4,14889.8 -693.3,14751.5" fill="#300000"/><polygon points="1357.3,237.0 -899.3,14819.8 -492.2,14684.9" fill="#360000"/><polygon points="1357.3,237.0 -693.3,14751.5 -295.8,14619.8" fill="#3d0000"/><polygon points="1357.3,237.0 -492.2,14684.9 -104.0,14556.3" fill="#430000"/><polygon points="1357.3,237.0 -295.8,14619.8 83.3,14494.1" fill="#490000"/><polygon points="1357.3,237.0 -104.0,14556.3 266.4,14433.5" fill="#500000"/><polygon points="1357.3,237.0 83.3,14494.1 445.4,14374.1" fill="#560000"/><polygon points="1357.3,237.0 266.4,14433.5 620.4,14316.1" fill="#5c0000"/><polygon points="1357.3,237.0 445.4,14374.1 791.6,14259.4" fill="#630000"/><polygon points="1357.3,237.0 620.4,14316.1 959.0,14203.9" fill="#690000"/><polygon points="1357.3,237.0 791.6,14259.4 1122.8,14149.6" fill="#700000"/><polygon points="1357.3,237.0 959.0,14203.9 1283.1,14096.5" fill="#760000"/><polygon points="1357.3,237.0 1122.8,14149.6 1440.1,14044.5" fill="#7c0000"/><polygon points="1357.3,237.0 1283.1,14096.5 1593.7,13993.5" fill="#830000"/><polygon points="1357.3,237.0 1440.1,14044.5 1744.2,13943.6" fill="#890000"/><polygon points="1357.3,237.0 1593.7,13993.5 1891.7,13894.8" fill="#8f0000"/><polygon points="1357.3,237.0 1744.2,13943.6 2036.1,13846.9" fill="#960000"/><polygon points="1357.3,237.0 1891.7,13894.8 2177.7,13800.0" fill="#9c0000"/><polygon points="1357.3,237.0 2036.1,13846.9 2316.4,13754.0" fill="#a30000"/><polygon points="1357.3,237.0 2177.7,13800.0 2452.4,13708.9" fill="#a90000"/><polygon points="1357.3,237.0 2316.4,13754.0 2585.8,13664.7" fill="#af0000"/><polygon points="1357.3,237.0 2452.4,13708.9 2716.6,13621.4" fill="#b60000"/><polygon points="1357.3,237.0 2585.8,13664.7 2844.9,13578.8" fill="#bc0000"/><polygon points="1357.3,237.0 2716.6,13621.4 2970.8,13537.1" fill="#c20000"/><polygon points="1357.3,237.0 2844.9,13578.8 3094.3,13496.2" fill="#c90000"/><polygon points="1357.3,237.0 2970.8,13537.1 3215.6,13456.0" fill="#cf0000"/><polygon points="1357.3,237.0 3094.3,13496.2 3334.6,13416.5" fill="#d60000"/><polygon points="1357.3,237.0 3215.6,13456.0 3451.4,13377.8" fill="#dc0000"/><polygon points="1357.3,237.0 3334.6,13416.5 3566.2,13339.8" fill="#e20000"/><polygon points="1357.3,237.0 3451.4,13377.8 3678.9,13302.4" fill="#e90000"/><polygon points="1357.3,237.0 3566.2,13339.8 3789.6,13265.7" fill="#ef0000"/><polygon points="1357.3,237.0 3678.9,13302.4 4151.7,13145.7" fill="#f50000"/><polygon points="1357.3,237.0 3789.6,13265.7 4151.7,13145.7" fill="#fc0000"/>
</g>
</g>
<g style="mix-blend-mode:screen">
<polygon points="1641.8,1691.7 7624.4,-4941.8 -629.4,-9921.5 -3742.3,1620.7" fill="#00ff00"/>
<g clip-path="url(#icone0)">
<polygon points="673.1,2769.6 19594.1,-3501.6 18624.2,-4085.8" fill="#000300"/><polygon points="673.1,2769.6 19092.7,-3803.6 18185.3,-4350.2" fill="#000a00"/><polygon points="673.1,2769.6 18624.2,-4085.8 17773.4,-4598.3" fill="#001000"/><polygon points="673.1,2769.6 18185.3,-4350.2 17386.1,-4831.6" fill="#001600"/><polygon points="673.1,2769.6 17773.4,-4598.3 17021.2,-5051.4" fill="#001d00"/><polygon points="673.1,2769.6 17386.1,-4831.6 16676.8,-5258.9" fill="#002300"/><polygon points="673.1,2769.6 17021.2,-5051.4 16351.3,-5454.9" fill="#002900"/><polygon points="673.1,2769.6 16676.8,-5258.9 16043.1,-5640.6" fill="#003000"/><polygon points="673.1,2769.6 16351.3,-5454.9 15750.9,-5816.6" fill="#003600"/><polygon points="673.1,2769.6 16043.1,-5640.6 15473.5,-5983.7" fill="#003d00"/><polygon points="673.1,2769.6 15750.9,-5816.6 15209.7,-6142.6" fill="#004300"/><polygon points="673.1,2769.6 15473.5,-5983.7 14958.7,-6293.8" fill="#004900"/><polygon points="673.1,2769.6 15209.7,-6142.6 14719.4,-6437.9" fill="#005000"/><polygon points="673.1,2769.6 14958.7,-6293.8 14491.1,-6575.4" fill="#005600"/><polygon points="673.1,2769.6 14719.4,-6437.9 14273.1,-6706.8" fill="#005c00"/><polygon points="673.1,2769.6 14491.1,-6575.4 14064.7,-6832.3" fill="#006300"/><polygon points="673.1,2769.6 14273.1,-6706.8 13865.2,-6952.5" fill="#006900"/><polygon points="673.1,2769.6 14064.7,-6832.3 13674.1,-7067.6" fill="#007000"/><polygon points="673.1,2769.6 13865.2,-6952.5 13490.9,-7178.0" fill="#007600"/><polygon points="673.1,2769.6 13674.1,-7067.6 13315.1,-7283.9" fill="#007c00"/><polygon points="673.1,2769.6 13490.9,-7178.0 13146.2,-7385.6" fill="#008300"/><polygon points="673.1,2769.6 13315.1,-7283.9 12983.9,-7483.4" fill="#008900"/><polygon points="673.1,2769.6 13146.2,-7385.6 12827.7,-7577.4" fill="#008f00"/><polygon points="673.1,2769.6 12983.9,-7483.4 12677.4,-7668.0" fill="#009600"/><polygon points="673.1,2769.6 12827.7,-7577.4 12532.6,-7755.2" fill="#009c00"/><polygon points="673.1,2769.6 12677.4,-7668.0 12393.0,-7839.3" fill="#00a300"/><polygon points="673.1,2769.6 12532.6,-7755.2 12258.4,-7920.4" fill="#00a900"/><polygon points="673.1,2769.6 12393.0,-7839.3 12128.4,-7998.7" fill="#00af00"/><polygon points="673.1,2769.6 12258.4,-7920.4 12002.9,-8074.3" fill="#00b600"/><polygon points="673.1,2769.6 12128.4,-7998.7 11881.6,-8147.4" fill="#00bc00"/><polygon points="673.1,2769.6 12002.9,-8074.3 11764.2,-8218.0" fill="#00c200"/><polygon points="673.1,2769.6 11881.6,-8147.4 11650.8,-8286.4" fill="#00c900"/><polygon points="673.1,2769.6 11764.2,-8218.0 11540.9,-8352.6" fill="#00cf00"/><polygon points="673.1,2769.6 11650.8,-8286.4 11434.5,-8416.7" fill="#00d600"/><polygon points="673.1,2769.6 11540.9,-8352.6 11331.4,-8478.8" fill="#00dc00"/><polygon points="673.1,2769.6 11434.5,-8416.7 11231.4,-8539.0" fill="#00e200"/><polygon points="673.1,2769.6 11331.4,-8478.8 11134.4,-8597.4" fill="#00e900"/><polygon points="673.1,2769.6 11231.4,-8539.0 11040.3,-8654.1" fill="#00ef00"/><polygon points="673.1,2769.6 11134.4,-8597.4 10740.3,-8834.8" fill="#00f500"/><polygon points="673.1,2769.6 11040.3,-8654.1 10740.3,-8834.8" fill="#00fc00"/>
</g>
<g clip-path="url(#icone2)">
<polygon points="3826.6,1724.4 -15094.4,7995.6 -14944.4,7440.3" fill="#000300"/><polygon points="3826.6,1724.4 -15018.0,7712.8 -14873.4,7177.6" fill="#000a00"/><polygon points="3826.6,1724.4 -14944.4,7440.3 -14804.9,6924.1" fill="#001000"/><polygon points="3826.6,1724.4 -14873.4,7177.6 -14738.8,6679.4" fill="#001600"/><polygon points="3826.6,1724.4 -14804.9,6924.1 -14674.9,6443.1" fill="#001d00"/><polygon points="3826.6,1724.4 -14738.8,6679.4 -14613.2,6214.6" fill="#002300"/><polygon points="3826.6,1724.4 -14674.9,6443.1 -14553.5,5993.7" fill="#002900"/><polygon points="3826.6,1724.4 -14613.2,6214.6 -14495.8,5780.0" fill="#003000"/><polygon points="3826.6,1724.4 -14553.5,5993.7 -14439.9,5573.0" fill="#003600"/><polygon points="3826.6,1724.4 -14495.8,5780.0 -14385.7,5372.6" fill="#003d00"/><polygon points="3826.6,1724.4 -14439.9,5573.0 -14333.3,5178.4" fill="#004300"/><polygon points="3826.6,1724.4 -14385.7,5372.6 -14282.4,4990.0" fill="#004900"/><polygon points="3826.6,1724.4 -14333.3,5178.4 -14233.0,4807.3" fill="#005000"/><polygon points="3826.6,1724.4 -14282.4,4990.0 -14185.1,4630.0" fill="#005600"/><polygon points="3826.6,1724.4 -14233.0,4807.3 -14138.6,4457.9" fill="#005c00"/><polygon points="3826.6,1724.4 -14185.1,4630.0 -14093.4,4290.7" fill="#006300"/><polygon points="3826.6,1724.4 -14138.6,4457.9 -14049.5,4128.2" fill="#006900"/><polygon points="3826.6,1724.4 -14093.4,4290.7 -14006.9,3970.3" fill="#007000"/><polygon points="3826.6,1724.4 -14049.5,4128.2 -13965.4,3816.7" fill="#007600"/><polygon points="3826.6,1724.4 -14006.9,3970.3 -13925.0,3667.3" fill="#007c00"/><polygon points="3826.6,1724.4 -13965.4,3816.7 -13885.7,3521.8" fill="#008300"/><polygon points="3826.6,1724.4 -13925.0,3667.3 -13847.4,3380.3" fill="#008900"/><polygon points="3826.6,1724.4 -13885.7,3521.8 -13810.2,3242.4" fill="#008f00"/><polygon points="3826.6,1724.4 -13847.4,3380.3 -13773.9,3108.0" fill="#009600"/><polygon points="3826.6,1724.4 -13810.2,3242.4 -13738.5,2977.1" fill="#009c00"/><polygon points="3826.6,1724.4 -13773.9,3108.0 -13704.0,2849.4" fill="#00a300"/><polygon points="3826.6,1724.4 -13738.5,2977.1 -13670.4,2724.9" fill="#00a900"/><polygon points="3826.6,1724.4 -13704.0,2849.4 -13637.6,2603.5" fill="#00af00"/><polygon points="3826.6,1724.4 -13670.4,2724.9 -13605.6,2485.0" fill="#00b600"/><polygon points="3826.6,1724.4 -13637.6,2603.5 -13574.3,2369.3" fill="#00bc00"/><polygon points="3826.6,1724.4 -13605.6,2485.0 -13543.8,2256.4" fill="#00c200"/><polygon points="3826.6,1724.4 -13574.3,2369.3 -13514.0,2146.0" fill="#00c900"/><polygon points="3826.6,1724.4 -13543.8,2256.4 -13484.9,2038.3" fill="#00cf00"/><polygon points="3826.6,1724.4 -13514.0,2146.0 -13456.4,1933.0" fill="#00d600"/><polygon points="3826.6,1724.4 -13484.9,2038.3 -13428.6,1830.0" fill="#00dc00"/><polygon points="3826.6,1724.4 -13456.4,1933.0 -13401.4,1729.4" fill="#00e200"/><polygon points="3826.6,1724.4 -13428.6,1830.0 -13374.8,1631.0" fill="#00e900"/><polygon points="3826.6,1724.4 -13401.4,1729.4 -13348.8,1534.7" fill="#00ef00"/><polygon points="3826.6,1724.4 -13374.8,1631.0 -13264.5,1222.5" fill="#00f500"/><polygon points="3826.6,1724.4 -13348.8,1534.7 -13264.5,1222.5" fill="#00fc00"/>
</g>
</g>
<g style="mix-blend-mode:screen">
<polygon points="1643.5,1685.6 -3741.6,1577.6 -6103.4,10339.3 2781.5,7397.5" fill="#0000ff"/>
<g clip-path="url(#icone0)">
<polygon points="1357.3,237.0 16172.8,9161.4 14573.4,9691.5" fill="#000003"/><polygon points="1357.3,237.0 15337.8,9438.2 13871.0,9924.4" fill="#00000a"/><polygon points="1357.3,237.0 14573.4,9691.5 13223.3,10139.0" fill="#000010"/><polygon points="1357.3,237.0 13871.0,9924.4 12624.2,10337.6" fill="#000016"/><polygon points="1357.3,237.0 13223.3,10139.0 12068.4,10521.8" fill="#00001d"/><polygon points="1357.3,237.0 12624.2,10337.6 11551.4,10693.1" fill="#000023"/><polygon points="1357.3,237.0 12068.4,10521.8 11069.3,10852.9" fill="#000029"/><polygon points="1357.3,237.0 11551.4,10693.1 10618.6,11002.3" fill="#000030"/><polygon points="1357.3,237.0 11069.3,10852.9 10196.4,11142.2" fill="#000036"/><polygon points="1357.3,237.0 10618.6,11002.3 9800.1,11273.6" fill="#00003d"/><polygon points="1357.3,237.0 10196.4,11142.2 9427.3,11397.2" fill="#000043"/><polygon points="1357.3,237.0 9800.1,11273.6 9076.0,11513.6" fill="#000049"/><polygon points="1357.3,237.0 9427.3,11397.2 8744.4,11623.5" fill="#000050"/><polygon points="1357.3,237.0 9076.0,11513.6 8430.9,11727.4" fill="#000056"/><polygon points="1357.3,237.0 8744.4,11623.5 8134.1,11825.8" fill="#00005c"/><polygon points="1357.3,237.0 8430.9,11727.4 7852.6,11919.1" fill="#000063"/><polygon points="1357.3,237.0 8134.1,11825.8 7585.3,12007.7" fill="#000069"/><polygon points="1357.3,237.0 7852.6,11919.1 7331.1,12091.9" fill="#000070"/><polygon points="1357.3,237.0 7585.3,12007.7 7089.2,12172.1" fill="#000076"/><polygon points="1357.3,237.0 7331.1,12091.9 6858.6,12248.5" fill="#00007c"/><polygon points="1357.3,237.0 7089.2,12172.1 6638.5,12321.5" fill="#000083"/><polygon points="1357.3,237.0 6858.6,12248.5 6428.4,12391.1" fill="#000089"/><polygon points="1357.3,237.0 6638.5,12321.5 6227.4,12457.8" fill="#00008f"/><polygon points="1357.3,237.0 6428.4,12391.1 6035.0,12521.5" fill="#000096"/><polygon points="1357.3,237.0 6227.4,12457.8 5850.7,12582.6" fill="#00009c"/><polygon points="1357.3,237.0 6035.0,12521.5 5674.0,12641.2" fill="#0000a3"/><polygon points="1357.3,237.0 5850.7,12582.6 5504.4,12697.4" fill="#0000a9"/><polygon points="1357.3,237.0 5674.0,12641.2 5341.5,12751.4" fill="#0000af"/><polygon points="1357.3,237.0 5504.4,12697.4 5184.9,12803.3" fill="#0000b6"/><polygon points="1357.3,237.0 5341.5,12751.4 5034.3,12853.2" fill="#0000bc"/><polygon points="1357.3,237.0 5184.9,12803.3 4889.2,12901.3" fill="#0000c2"/><polygon points="1357.3,237.0 5034.3,12853.2 4749.5,12947.6" fill="#0000c9"/><polygon points="1357.3,237.0 4889.2,12901.3 4614.8,12992.2" fill="#0000cf"/><polygon points="1357.3,237.0 4749.5,12947.6 4484.8,13035.3" fill="#0000d6"/><polygon points="1357.3,237.0 4614.8,12992.2 4359.4,13076.9" fill="#0000dc"/><polygon points="1357.3,237.0 4484.8,13035.3 4238.2,13117.0" fill="#0000e2"/><polygon points="1357.3,237.0 4359.4,13076.9 4121.1,13155.9" fill="#0000e9"/><polygon points="1357.3,237.0 4238.2,13117.0 4007.9,13193.4" fill="#0000ef"/><polygon points="1357.3,237.0 4121.1,13155.9 3649.3,13312.2" fill="#0000f5"/><polygon points="1357.3,237.0 4007.9,13193.4 3649.3,13312.2" fill="#0000fc"/>
</g>
<g clip-path="url(#icone1)">
<polygon points="3826.6,1724.4 -10988.9,-7200.0 -11242.8,-6260.4" fill="#000003"/><polygon points="3826.6,1724.4 -11119.9,-6715.2 -11358.3,-5832.9" fill="#00000a"/><polygon points="3826.6,1724.4 -11242.8,-6260.4 -11467.0,-5430.3" fill="#000010"/><polygon points="3826.6,1724.4 -11358.3,-5832.9 -11569.7,-5050.4" fill="#000016"/><polygon points="3826.6,1724.4 -11467.0,-5430.3 -11666.6,-4691.5" fill="#00001d"/><polygon points="3826.6,1724.4 -11569.7,-5050.4 -11758.4,-4351.8" fill="#000023"/><polygon points="3826.6,1724.4 -11666.6,-4691.5 -11845.4,-4029.8" fill="#000029"/><polygon points="3826.6,1724.4 -11758.4,-4351.8 -11928.0,-3724.1" fill="#000030"/><polygon points="3826.6,1724.4 -11845.4,-4029.8 -12006.5,-3433.7" fill="#000036"/><polygon points="3826.6,1724.4 -11928.0,-3724.1 -12081.2,-3157.2" fill="#00003d"/><polygon points="3826.6,1724.4 -12006.5,-3433.7 -12152.3,-2893.9" fill="#000043"/><polygon points="3826.6,1724.4 -12081.2,-3157.2 -12220.2,-2642.6" fill="#000049"/><polygon points="3826.6,1724.4 -12152.3,-2893.9 -12285.0,-2402.8" fill="#000050"/><polygon points="3826.6,1724.4 -12220.2,-2642.6 -12347.0,-2173.4" fill="#000056"/><polygon points="3826.6,1724.4 -12285.0,-2402.8 -12406.2,-1954.0" fill="#00005c"/><polygon points="3826.6,1724.4 -12347.0,-2173.4 -12463.0,-1743.9" fill="#000063"/><polygon points="3826.6,1724.4 -12406.2,-1954.0 -12517.5,-1542.4" fill="#000069"/><polygon points="3826.6,1724.4 -12463.0,-1743.9 -12569.7,-1349.1" fill="#000070"/><polygon points="3826.6,1724.4 -12517.5,-1542.4 -12619.8,-1163.5" fill="#000076"/><polygon points="3826.6,1724.4 -12569.7,-1349.1 -12668.0,-985.1" fill="#00007c"/><polygon points="3826.6,1724.4 -12619.8,-1163.5 -12714.4,-813.6" fill="#000083"/><polygon points="3826.6,1724.4 -12668.0,-985.1 -12759.0,-648.4" fill="#000089"/><polygon points="3826.6,1724.4 -12714.4,-813.6 -12802.0,-489.4" fill="#00008f"/><polygon points="3826.6,1724.4 -12759.0,-648.4 -12843.4,-336.1" fill="#000096"/><polygon points="3826.6,1724.4 -12802.0,-489.4 -12883.3,-188.2" fill="#00009c"/><polygon points="3826.6,1724.4 -12843.4,-336.1 -12921.9,-45.5" fill="#0000a3"/><polygon points="3826.6,1724.4 -12883.3,-188.2 -12959.1,92.3" fill="#0000a9"/><polygon points="3826.6,1724.4 -12921.9,-45.5 -12995.1,225.5" fill="#0000af"/><polygon points="3826.6,1724.4 -12959.1,92.3 -13029.9,354.2" fill="#0000b6"/><polygon points="3826.6,1724.4 -12995.1,225.5 -13063.5,478.8" fill="#0000bc"/><polygon points="3826.6,1724.4 -13029.9,354.2 -13096.1,599.4" fill="#0000c2"/><polygon points="3826.6,1724.4 -13063.5,478.8 -13127.7,716.1" fill="#0000c9"/><polygon points="3826.6,1724.4 -13096.1,599.4 -13158.2,829.3" fill="#0000cf"/><polygon points="3826.6,1724.4 -13127.7,716.1 -13187.9,938.9" fill="#0000d6"/><polygon points="3826.6,1724.4 -13158.2,829.3 -13216.6,1045.3" fill="#0000dc"/><polygon points="3826.6,1724.4 -13187.9,938.9 -13244.5,1148.5" fill="#0000e2"/><polygon points="3826.6,1724.4 -13216.6,1045.3 -13271.5,1248.7" fill="#0000e9"/><polygon points="3826.6,1724.4 -13244.5,1148.5 -13297.8,1346.0" fill="#0000ef"/><polygon points="3826.6,1724.4 -13271.5,1248.7 -13381.8,1656.8" fill="#0000f5"/><polygon points="3826.6,1724.4 -13297.8,1346.0 -13381.8,1656.8" fill="#0000fc"/>
</g>
</g>
</g>
<path d="M2232.0,751.0 H2540.5 V963.0 H2232.0 Z M3826.6,1724.4 L1357.3,237.0 L673.1,2769.6 Z" fill="#000" fill-opacity="0.40" fill-rule="evenodd"/>
</g></g>
<rect x="2237.0" y="756.0" width="298.5" height="202.0" fill="none" stroke="#9a9a9a" stroke-width="2"/>
<rect x="2375.5" y="846.3" width="18.4" height="18.4" fill="none" stroke="#fff" stroke-width="2"/>
<circle cx="2424.9" cy="873" r="5.8" fill="#c8c800" stroke="#000" stroke-width="1.5"/>
<rect x="200.00" y="1490.00" width="2360.00" height="62.00" fill="url(#strip)"/>
<path d="M201.5 1552 V1494 Q201.5 1490.5 205 1490.5 H242.5 Q246 1490.5 246 1494 V1552 Z" fill="url(#pbtn)"/>
<circle cx="223.5" cy="1499" r="7" fill="#6a6a6a"/><circle cx="223.5" cy="1499.5" r="7" fill="none" stroke="#999" stroke-width="0.6" opacity="0.6"/>
<polygon points="219.3,1501 227.7,1501 223.5,1496" fill="#111"/>
<rect x="206" y="1516" width="35" height="30" rx="2.5" fill="#ffff00"/>
<path d="M252 1552 V1494 Q252 1490.5 255.5 1490.5 H398.5 Q402 1490.5 402 1494 V1552 Z" fill="url(#pbtn)"/>
<rect x="257" y="1495" width="140" height="36.5" rx="3" fill="#8a8a6a" opacity="0.5"/>
<rect x="257.5" y="1495.5" width="139.5" height="35.5" rx="3" fill="#c2c2a0"/>
<text x="327.0" y="1546.0" font-size="11" fill="#333" text-anchor="middle" font-weight="bold" textLength="21.0" lengthAdjust="spacingAndGlyphs">20%</text>
<path d="M404 1552 V1494 Q404 1490.5 407.5 1490.5 H550.5 Q554 1490.5 554 1494 V1552 Z" fill="url(#pbtn)"/>
<rect x="409" y="1495" width="140" height="36.5" rx="3" fill="#8a8a6a" opacity="0.5"/>
<rect x="409.5" y="1495.5" width="139.5" height="35.5" rx="3" fill="#c3c187"/>
<text x="479.0" y="1546.0" font-size="11" fill="#333" text-anchor="middle" font-weight="bold" textLength="21.0" lengthAdjust="spacingAndGlyphs">40%</text>
<path d="M556 1552 V1494 Q556 1490.5 559.5 1490.5 H702.5 Q706 1490.5 706 1494 V1552 Z" fill="url(#pbtn)"/>
<rect x="561" y="1495" width="140" height="36.5" rx="3" fill="#8a8a6a" opacity="0.5"/>
<rect x="561.5" y="1495.5" width="139.5" height="35.5" rx="3" fill="#c3c06a"/>
<text x="631.0" y="1546.0" font-size="11" fill="#333" text-anchor="middle" font-weight="bold" textLength="21.0" lengthAdjust="spacingAndGlyphs">60%</text>
<path d="M708 1552 V1494 Q708 1490.5 711.5 1490.5 H854.5 Q858 1490.5 858 1494 V1552 Z" fill="url(#pbtn)"/>
<rect x="713" y="1495" width="140" height="36.5" rx="3" fill="#8a8a6a" opacity="0.5"/>
<rect x="713.5" y="1495.5" width="139.5" height="35.5" rx="3" fill="#c4c04b"/>
<text x="783.0" y="1546.0" font-size="11" fill="#333" text-anchor="middle" font-weight="bold" textLength="21.0" lengthAdjust="spacingAndGlyphs">80%</text>
<path d="M860 1552 V1494 Q860 1490.5 863.5 1490.5 H1006.5 Q1010 1490.5 1010 1494 V1552 Z" fill="url(#pbtnsel)"/>
<rect x="865.5" y="1495.5" width="139.5" height="35.5" rx="3" fill="#c6c400"/>
<text x="935.0" y="1546.0" font-size="11" fill="#fff" text-anchor="middle" font-weight="bold" textLength="26.0" lengthAdjust="spacingAndGlyphs">100%</text>
<defs><linearGradient id="navc" x1="0" x2="0" y1="0" y2="1"><stop offset="0" stop-color="#7c7c7c"/><stop offset="1" stop-color="#b4b4b4"/></linearGradient><linearGradient id="stopg" x1="0" x2="0" y1="0" y2="1"><stop offset="0" stop-color="#808080"/><stop offset="1" stop-color="#5c5c5c"/></linearGradient></defs>
<path d="M2237 1552 V1494 Q2237 1490 2241 1490 H2286.5 V1552 Z" fill="url(#stopg)"/>
<rect x="2247" y="1516" width="28" height="28" rx="3.5" fill="#a8a8a8" stroke="#1a1a1a" stroke-width="2.4"/>
<rect x="2254.00" y="1522.50" width="14.00" height="13.50" fill="#000"/>
<path d="M2287 1520.5 V1490 H2554 Q2558 1490 2558 1494 V1520.5 Z" fill="url(#navbtn)"/>
<circle cx="2310.0" cy="1505.5" r="9" fill="url(#navc)" opacity="0.8"/>
<circle cx="2355.0" cy="1505.5" r="9" fill="url(#navc)" opacity="0.8"/>
<line x1="2332.50" y1="1490.50" x2="2332.50" y2="1520.50" stroke="#5e5e5e" stroke-width="1.2"/>
<circle cx="2400.0" cy="1505.5" r="9" fill="url(#navc)" opacity="0.8"/>
<line x1="2377.50" y1="1490.50" x2="2377.50" y2="1520.50" stroke="#5e5e5e" stroke-width="1.2"/>
<circle cx="2445.0" cy="1505.5" r="9" fill="url(#navc)" opacity="0.8"/>
<line x1="2422.50" y1="1490.50" x2="2422.50" y2="1520.50" stroke="#5e5e5e" stroke-width="1.2"/>
<circle cx="2490.0" cy="1505.5" r="9" fill="url(#navc)" opacity="0.8"/>
<line x1="2467.50" y1="1490.50" x2="2467.50" y2="1520.50" stroke="#5e5e5e" stroke-width="1.2"/>
<circle cx="2535.0" cy="1505.5" r="9" fill="url(#navc)" opacity="0.8"/>
<line x1="2512.50" y1="1490.50" x2="2512.50" y2="1520.50" stroke="#5e5e5e" stroke-width="1.2"/>
<line x1="2287.00" y1="1520.60" x2="2558.00" y2="1520.60" stroke="#4a4a4a" stroke-width="1.2"/>
<path d="M2287 1552 V1524.5 Q2287 1521.3 2290.2 1521.3 H2554.8 Q2558 1521.3 2558 1524.5 V1552 Z" fill="url(#navbtn)"/>
<line x1="2287.00" y1="1521.90" x2="2558.00" y2="1521.90" stroke="#c8c8c8" stroke-width="0.8"/>
<line x1="2422.70" y1="1521.50" x2="2422.70" y2="1552.00" stroke="#505050" stroke-width="1.2"/>
<circle cx="2317.5" cy="1536.3" r="10" fill="url(#navc)"/><circle cx="2530.5" cy="1536.3" r="10" fill="url(#navc)"/>
<path d="M2316,1531 L2311.5,1536.3 L2316,1541.6 M2321.5,1531 L2317,1536.3 L2321.5,1541.6" fill="none" stroke="#2a2a2a" stroke-width="1.5"/>
<path d="M2526.5,1531 L2531,1536.3 L2526.5,1541.6 M2532,1531 L2536.5,1536.3 L2532,1541.6" fill="none" stroke="#2a2a2a" stroke-width="1.5"/>
<text x="2344.0" y="1543.5" font-size="22.5" fill="#2a2a2a" textLength="50.0" lengthAdjust="spacingAndGlyphs" stroke="#2a2a2a" stroke-width="0.5">Back</text>
<text x="2450.5" y="1543.5" font-size="22.5" fill="#2a2a2a" textLength="51.5" lengthAdjust="spacingAndGlyphs" stroke="#2a2a2a" stroke-width="0.5">Next</text>
<g opacity="0.56">
<path d="M2226.5,1509.5 L2223.3,1481.3 L2178,1473.4 L2179.3,1518.6 L2208.7,1534.8 L2259,1517.8" fill="none" stroke="#e8e8e8" stroke-width="8" stroke-linejoin="miter" stroke-linecap="round"/>
<path d="M2228,1510 L2188,1513.4 M2260,1517.6 L2233,1513.2" fill="none" stroke="#e8e8e8" stroke-width="5" stroke-linecap="round"/>
<path d="M2226.5,1509.5 L2223.3,1481.3 L2178,1473.4 L2179.3,1518.6 L2208.7,1534.8 L2259,1517.8" fill="none" stroke="#b4202a" stroke-width="5.2" stroke-linejoin="miter" stroke-linecap="butt"/>
<path d="M2228,1510 L2188,1513.4 M2260,1517.6 L2233,1513.2" fill="none" stroke="#b4202a" stroke-width="2.4" stroke-linecap="round"/>
<polygon points="2188.4,1488.2 2197,1483.5 2206.5,1494 2230.8,1467.8 2233.6,1469.8 2204.4,1507.6" fill="#161616" stroke="#e8e8e8" stroke-width="1.6" stroke-linejoin="round"/>
<text x="2232.3" y="1508.3" font-size="37" font-weight="bold" fill="#e8e8e8" stroke="#e8e8e8" stroke-width="4.6" stroke-linejoin="round" textLength="200.6" lengthAdjust="spacingAndGlyphs">NOTEBOOK</text>
<text x="2232.3" y="1508.3" font-size="37" font-weight="bold" fill="#b4202a" stroke="#b4202a" stroke-width="1.5" stroke-linejoin="round" textLength="200.6" lengthAdjust="spacingAndGlyphs">NOTEBOOK</text>
<text x="2435" y="1508.3" font-size="37" fill="#e8e8e8" stroke="#e8e8e8" stroke-width="4.4" stroke-linejoin="round" textLength="113.5" lengthAdjust="spacingAndGlyphs">CHECK</text>
<text x="2435" y="1508.3" font-size="37" fill="#161616" stroke="#161616" stroke-width="1.3" stroke-linejoin="round" textLength="113.5" lengthAdjust="spacingAndGlyphs">CHECK</text>
</g>
<rect x="2553" y="58" width="7" height="1494" fill="url(#redge)"/>
</svg>
</body></html>
